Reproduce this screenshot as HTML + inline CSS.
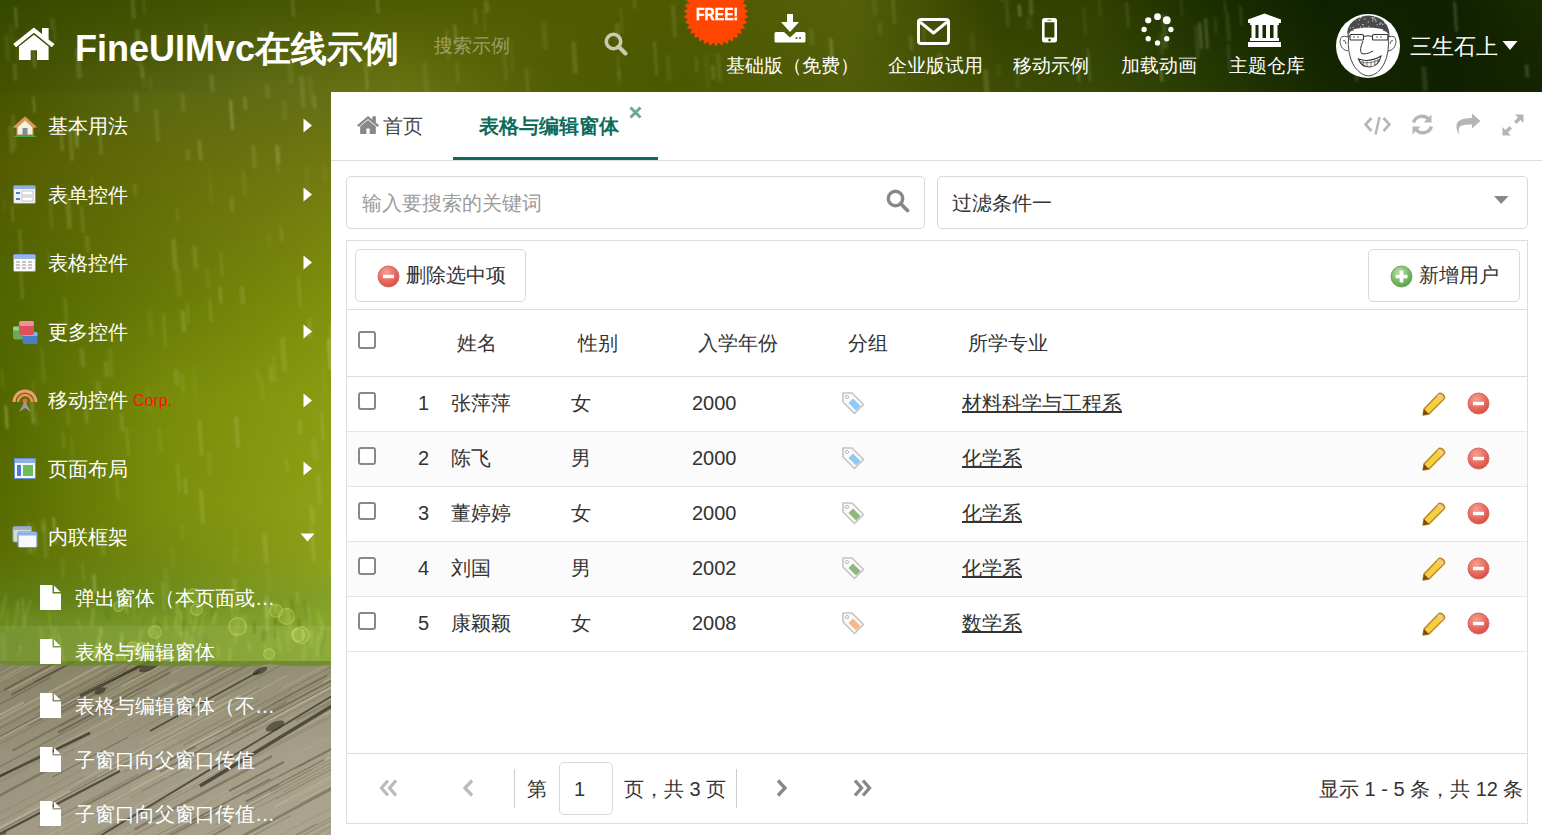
<!DOCTYPE html>
<html><head><meta charset="utf-8">
<style>
*{box-sizing:border-box;margin:0;padding:0}
html,body{width:1542px;height:835px;overflow:hidden}
body{position:relative;font-family:"Liberation Sans",sans-serif;color:#333;
background:#5a6e0c;}
.abs{position:absolute}
.t{position:absolute;white-space:nowrap;line-height:30px;font-size:20px}
#bg{position:absolute;left:0;top:0;width:1542px;height:835px;overflow:hidden}
#main{position:absolute;left:331px;top:92px;width:1211px;height:743px;background:#fff}
.hdtxt{color:#fff;font-size:18.6px}
.side{color:#fff}
.box{position:absolute;border:1px solid #d8d8d8;border-radius:5px;background:#fff}
.ln{position:absolute;background:#e3e3e3;height:1px}
.cb{position:absolute;width:18px;height:18px;border:2px solid #888;border-radius:3px;background:#fff}
.u{text-decoration:underline}
</style></head><body>
<div id="bg">
<div class="abs" style="left:0;top:0px;width:1542px;height:4px;background:linear-gradient(90deg,#364800 0px,#455501 250px,#4d5b00 400px,#505c00 550px,#4e5a00 660px,#546008 850px,#334000 1000px,#323f00 1100px,#1c2e00 1200px,#0e2200 1320px,#102000 1450px,#1a2a00 1542px)"></div><div class="abs" style="left:0;top:4px;width:1542px;height:4px;background:linear-gradient(90deg,#374900 0px,#465602 250px,#4e5c01 400px,#505c00 550px,#4e5a00 660px,#546008 850px,#344100 1000px,#324000 1100px,#1d2f00 1200px,#0f2200 1320px,#102000 1450px,#1a2a00 1542px)"></div><div class="abs" style="left:0;top:8px;width:1542px;height:4px;background:linear-gradient(90deg,#384900 0px,#475703 250px,#4f5d02 400px,#505c00 550px,#4e5a00 660px,#546008 850px,#344100 1000px,#324001 1100px,#1e3000 1200px,#0f2300 1320px,#102000 1450px,#192900 1542px)"></div><div class="abs" style="left:0;top:12px;width:1542px;height:4px;background:linear-gradient(90deg,#384a00 0px,#485804 250px,#515e03 400px,#505c01 550px,#4d5a00 660px,#535f08 850px,#354201 1000px,#334001 1100px,#1e3000 1200px,#0f2300 1320px,#102000 1450px,#192900 1542px)"></div><div class="abs" style="left:0;top:16px;width:1542px;height:4px;background:linear-gradient(90deg,#394a00 0px,#495905 250px,#525f04 400px,#505c01 550px,#4d5a00 660px,#535f08 850px,#354201 1000px,#334101 1100px,#1f3100 1200px,#102300 1320px,#102000 1450px,#192900 1542px)"></div><div class="abs" style="left:0;top:20px;width:1542px;height:4px;background:linear-gradient(90deg,#394a00 0px,#4b5a06 250px,#536004 400px,#505c01 550px,#4d5a00 660px,#535f08 850px,#364301 1000px,#334101 1100px,#1f3100 1200px,#102300 1320px,#102000 1450px,#192900 1542px)"></div><div class="abs" style="left:0;top:24px;width:1542px;height:4px;background:linear-gradient(90deg,#3a4b00 0px,#4c5b07 250px,#546105 400px,#515d01 550px,#4d5900 660px,#535f08 850px,#364301 1000px,#334202 1100px,#203201 1200px,#102400 1320px,#102000 1450px,#192800 1542px)"></div><div class="abs" style="left:0;top:28px;width:1542px;height:4px;background:linear-gradient(90deg,#3b4b00 0px,#4d5c08 250px,#566206 400px,#515d01 550px,#4d5900 660px,#535f08 850px,#374401 1000px,#334202 1100px,#213301 1200px,#112400 1320px,#102000 1450px,#182800 1542px)"></div><div class="abs" style="left:0;top:32px;width:1542px;height:4px;background:linear-gradient(90deg,#3b4c00 0px,#4e5d09 250px,#576407 400px,#515d01 550px,#4d5900 660px,#535f08 850px,#374401 1000px,#334202 1100px,#213301 1200px,#112400 1320px,#102000 1450px,#182800 1542px)"></div><div class="abs" style="left:0;top:36px;width:1542px;height:4px;background:linear-gradient(90deg,#3c4c00 0px,#505e0a 250px,#586507 400px,#515d02 550px,#4c5900 660px,#525e08 850px,#384502 1000px,#344302 1100px,#223401 1200px,#112400 1320px,#102000 1450px,#182800 1542px)"></div><div class="abs" style="left:0;top:40px;width:1542px;height:4px;background:linear-gradient(90deg,#3c4d00 0px,#515f0b 250px,#5a6608 400px,#515d02 550px,#4c5900 660px,#525e08 850px,#384502 1000px,#344303 1100px,#223401 1200px,#122500 1320px,#102000 1450px,#182700 1542px)"></div><div class="abs" style="left:0;top:44px;width:1542px;height:4px;background:linear-gradient(90deg,#3d4d00 0px,#52600c 250px,#5b6709 400px,#515d02 550px,#4c5900 660px,#525e08 850px,#384602 1000px,#344403 1100px,#233501 1200px,#122500 1320px,#102000 1450px,#182700 1542px)"></div><div class="abs" style="left:0;top:48px;width:1542px;height:4px;background:linear-gradient(90deg,#3e4d00 0px,#53610d 250px,#5c680a 400px,#515d02 550px,#4c5900 660px,#525e08 850px,#394702 1000px,#344403 1100px,#243601 1200px,#122500 1320px,#0f2000 1450px,#172700 1542px)"></div><div class="abs" style="left:0;top:52px;width:1542px;height:4px;background:linear-gradient(90deg,#3e4e00 0px,#54620e 250px,#5e690b 400px,#515d02 550px,#4c5900 660px,#525e08 850px,#394702 1000px,#344404 1100px,#243601 1200px,#132600 1320px,#0f2000 1450px,#172600 1542px)"></div><div class="abs" style="left:0;top:56px;width:1542px;height:4px;background:linear-gradient(90deg,#3f4e00 0px,#56630f 250px,#5f6a0b 400px,#515d03 550px,#4b5900 660px,#515d08 850px,#3a4803 1000px,#354504 1100px,#253701 1200px,#132600 1320px,#0f2000 1450px,#172600 1542px)"></div><div class="abs" style="left:0;top:60px;width:1542px;height:4px;background:linear-gradient(90deg,#3f4f00 0px,#576410 250px,#606c0c 400px,#515d03 550px,#4b5900 660px,#515d08 850px,#3a4803 1000px,#354504 1100px,#253701 1200px,#132600 1320px,#0f2000 1450px,#172600 1542px)"></div><div class="abs" style="left:0;top:64px;width:1542px;height:4px;background:linear-gradient(90deg,#404f00 0px,#586511 250px,#626d0d 400px,#515d03 550px,#4b5900 660px,#515d08 850px,#3b4903 1000px,#354504 1100px,#263801 1200px,#142600 1320px,#0f2000 1450px,#162600 1542px)"></div><div class="abs" style="left:0;top:68px;width:1542px;height:4px;background:linear-gradient(90deg,#415000 0px,#596612 250px,#636e0e 400px,#525e03 550px,#4b5800 660px,#515d08 850px,#3b4903 1000px,#354605 1100px,#273902 1200px,#142700 1320px,#0f2000 1450px,#162500 1542px)"></div><div class="abs" style="left:0;top:72px;width:1542px;height:4px;background:linear-gradient(90deg,#415000 0px,#5b6713 250px,#646f0e 400px,#525e03 550px,#4b5800 660px,#515d08 850px,#3c4a03 1000px,#354605 1100px,#273902 1200px,#142700 1320px,#0f2000 1450px,#162500 1542px)"></div><div class="abs" style="left:0;top:76px;width:1542px;height:4px;background:linear-gradient(90deg,#425000 0px,#5c6814 250px,#65700f 400px,#525e03 550px,#4b5800 660px,#515d08 850px,#3c4a03 1000px,#354705 1100px,#283a02 1200px,#152700 1320px,#0f2000 1450px,#162500 1542px)"></div><div class="abs" style="left:0;top:80px;width:1542px;height:4px;background:linear-gradient(90deg,#425100 0px,#5d6915 250px,#677110 400px,#525e04 550px,#4a5800 660px,#505c08 850px,#3d4b04 1000px,#364705 1100px,#283a02 1200px,#152700 1320px,#0f2000 1450px,#162500 1542px)"></div><div class="abs" style="left:0;top:84px;width:1542px;height:4px;background:linear-gradient(90deg,#435100 0px,#5e6a16 250px,#687211 400px,#525e04 550px,#4a5800 660px,#505c08 850px,#3d4b04 1000px,#364706 1100px,#293b02 1200px,#152800 1320px,#0f2000 1450px,#152400 1542px)"></div><div class="abs" style="left:0;top:88px;width:1542px;height:4px;background:linear-gradient(90deg,#445200 0px,#5f6b17 250px,#697312 400px,#525e04 550px,#4a5800 660px,#505c08 850px,#3e4c04 1000px,#364806 1100px,#2a3c02 1200px,#162800 1320px,#0f2000 1450px,#152400 1542px)"></div><div class="abs" style="left:0;top:92px;width:331px;height:4px;background:linear-gradient(90deg,#465400 0px,#5a6810 165px,#646e16 331px)"></div><div class="abs" style="left:0;top:96px;width:331px;height:4px;background:linear-gradient(90deg,#475500 0px,#5b680f 165px,#656f16 331px)"></div><div class="abs" style="left:0;top:100px;width:331px;height:4px;background:linear-gradient(90deg,#485500 0px,#5b690f 165px,#666f15 331px)"></div><div class="abs" style="left:0;top:104px;width:331px;height:4px;background:linear-gradient(90deg,#495600 0px,#5c690f 165px,#667015 331px)"></div><div class="abs" style="left:0;top:108px;width:331px;height:4px;background:linear-gradient(90deg,#495600 0px,#5d690e 165px,#677115 331px)"></div><div class="abs" style="left:0;top:112px;width:331px;height:4px;background:linear-gradient(90deg,#4a5700 0px,#5d690e 165px,#687115 331px)"></div><div class="abs" style="left:0;top:116px;width:331px;height:4px;background:linear-gradient(90deg,#4b5700 0px,#5e6a0e 165px,#697214 331px)"></div><div class="abs" style="left:0;top:120px;width:331px;height:4px;background:linear-gradient(90deg,#4c5800 0px,#5e6a0d 165px,#697214 331px)"></div><div class="abs" style="left:0;top:124px;width:331px;height:4px;background:linear-gradient(90deg,#4c5800 0px,#5f6a0d 165px,#6a7314 331px)"></div><div class="abs" style="left:0;top:128px;width:331px;height:4px;background:linear-gradient(90deg,#4d5800 0px,#606a0d 165px,#6b7414 331px)"></div><div class="abs" style="left:0;top:132px;width:331px;height:4px;background:linear-gradient(90deg,#4e5900 0px,#606a0c 165px,#6b7414 331px)"></div><div class="abs" style="left:0;top:136px;width:331px;height:4px;background:linear-gradient(90deg,#4f5900 0px,#616b0c 165px,#6c7513 331px)"></div><div class="abs" style="left:0;top:140px;width:331px;height:4px;background:linear-gradient(90deg,#505a00 0px,#616b0c 165px,#6d7513 331px)"></div><div class="abs" style="left:0;top:144px;width:331px;height:4px;background:linear-gradient(90deg,#505a00 0px,#626b0b 165px,#6e7613 331px)"></div><div class="abs" style="left:0;top:148px;width:331px;height:4px;background:linear-gradient(90deg,#515b00 0px,#636b0b 165px,#6e7713 331px)"></div><div class="abs" style="left:0;top:152px;width:331px;height:4px;background:linear-gradient(90deg,#525b00 0px,#636c0b 165px,#6f7712 331px)"></div><div class="abs" style="left:0;top:156px;width:331px;height:4px;background:linear-gradient(90deg,#535c00 0px,#646c0a 165px,#707812 331px)"></div><div class="abs" style="left:0;top:160px;width:331px;height:4px;background:linear-gradient(90deg,#535c00 0px,#646c0a 165px,#707812 331px)"></div><div class="abs" style="left:0;top:164px;width:331px;height:4px;background:linear-gradient(90deg,#535c00 0px,#646d0a 165px,#717912 331px)"></div><div class="abs" style="left:0;top:168px;width:331px;height:4px;background:linear-gradient(90deg,#535d00 0px,#646d0a 165px,#717a12 331px)"></div><div class="abs" style="left:0;top:172px;width:331px;height:4px;background:linear-gradient(90deg,#535d00 0px,#646d0a 165px,#727a11 331px)"></div><div class="abs" style="left:0;top:176px;width:331px;height:4px;background:linear-gradient(90deg,#535d00 0px,#656e09 165px,#727b11 331px)"></div><div class="abs" style="left:0;top:180px;width:331px;height:4px;background:linear-gradient(90deg,#535d00 0px,#656e09 165px,#737c11 331px)"></div><div class="abs" style="left:0;top:184px;width:331px;height:4px;background:linear-gradient(90deg,#525d00 0px,#656f09 165px,#737c11 331px)"></div><div class="abs" style="left:0;top:188px;width:331px;height:4px;background:linear-gradient(90deg,#525e00 0px,#656f09 165px,#737d11 331px)"></div><div class="abs" style="left:0;top:192px;width:331px;height:4px;background:linear-gradient(90deg,#525e00 0px,#656f09 165px,#747e11 331px)"></div><div class="abs" style="left:0;top:196px;width:331px;height:4px;background:linear-gradient(90deg,#525e00 0px,#657009 165px,#747f10 331px)"></div><div class="abs" style="left:0;top:200px;width:331px;height:4px;background:linear-gradient(90deg,#525e00 0px,#657009 165px,#757f10 331px)"></div><div class="abs" style="left:0;top:204px;width:331px;height:4px;background:linear-gradient(90deg,#525f00 0px,#657109 165px,#758010 331px)"></div><div class="abs" style="left:0;top:208px;width:331px;height:4px;background:linear-gradient(90deg,#525f00 0px,#657109 165px,#768110 331px)"></div><div class="abs" style="left:0;top:212px;width:331px;height:4px;background:linear-gradient(90deg,#525f00 0px,#667108 165px,#768110 331px)"></div><div class="abs" style="left:0;top:216px;width:331px;height:4px;background:linear-gradient(90deg,#525f00 0px,#667208 165px,#778210 331px)"></div><div class="abs" style="left:0;top:220px;width:331px;height:4px;background:linear-gradient(90deg,#526000 0px,#667208 165px,#77830f 331px)"></div><div class="abs" style="left:0;top:224px;width:331px;height:4px;background:linear-gradient(90deg,#526000 0px,#667308 165px,#78830f 331px)"></div><div class="abs" style="left:0;top:228px;width:331px;height:4px;background:linear-gradient(90deg,#526000 0px,#667308 165px,#78840f 331px)"></div><div class="abs" style="left:0;top:232px;width:331px;height:4px;background:linear-gradient(90deg,#516000 0px,#667308 165px,#78850f 331px)"></div><div class="abs" style="left:0;top:236px;width:331px;height:4px;background:linear-gradient(90deg,#516000 0px,#667408 165px,#79850f 331px)"></div><div class="abs" style="left:0;top:240px;width:331px;height:4px;background:linear-gradient(90deg,#516100 0px,#667408 165px,#79860e 331px)"></div><div class="abs" style="left:0;top:244px;width:331px;height:4px;background:linear-gradient(90deg,#516100 0px,#667508 165px,#7a870e 331px)"></div><div class="abs" style="left:0;top:248px;width:331px;height:4px;background:linear-gradient(90deg,#516100 0px,#677507 165px,#7a870e 331px)"></div><div class="abs" style="left:0;top:252px;width:331px;height:4px;background:linear-gradient(90deg,#516100 0px,#677507 165px,#7b880e 331px)"></div><div class="abs" style="left:0;top:256px;width:331px;height:4px;background:linear-gradient(90deg,#516200 0px,#677607 165px,#7b890e 331px)"></div><div class="abs" style="left:0;top:260px;width:331px;height:4px;background:linear-gradient(90deg,#516200 0px,#677607 165px,#7c890e 331px)"></div><div class="abs" style="left:0;top:264px;width:331px;height:4px;background:linear-gradient(90deg,#516200 0px,#677707 165px,#7c8a0d 331px)"></div><div class="abs" style="left:0;top:268px;width:331px;height:4px;background:linear-gradient(90deg,#516200 0px,#677707 165px,#7d8b0d 331px)"></div><div class="abs" style="left:0;top:272px;width:331px;height:4px;background:linear-gradient(90deg,#516300 0px,#677707 165px,#7d8c0d 331px)"></div><div class="abs" style="left:0;top:276px;width:331px;height:4px;background:linear-gradient(90deg,#506300 0px,#677807 165px,#7d8c0d 331px)"></div><div class="abs" style="left:0;top:280px;width:331px;height:4px;background:linear-gradient(90deg,#506300 0px,#677807 165px,#7e8d0d 331px)"></div><div class="abs" style="left:0;top:284px;width:331px;height:4px;background:linear-gradient(90deg,#506300 0px,#687906 165px,#7e8e0d 331px)"></div><div class="abs" style="left:0;top:288px;width:331px;height:4px;background:linear-gradient(90deg,#506300 0px,#687906 165px,#7f8e0c 331px)"></div><div class="abs" style="left:0;top:292px;width:331px;height:4px;background:linear-gradient(90deg,#506400 0px,#687906 165px,#7f8f0c 331px)"></div><div class="abs" style="left:0;top:296px;width:331px;height:4px;background:linear-gradient(90deg,#506400 0px,#687a06 165px,#80900c 331px)"></div><div class="abs" style="left:0;top:300px;width:331px;height:4px;background:linear-gradient(90deg,#506400 0px,#687a06 165px,#80900c 331px)"></div><div class="abs" style="left:0;top:304px;width:331px;height:4px;background:linear-gradient(90deg,#506400 0px,#697b06 165px,#81910c 331px)"></div><div class="abs" style="left:0;top:308px;width:331px;height:4px;background:linear-gradient(90deg,#506400 0px,#6a7c06 165px,#81910d 331px)"></div><div class="abs" style="left:0;top:312px;width:331px;height:4px;background:linear-gradient(90deg,#506400 0px,#6a7d07 165px,#81920d 331px)"></div><div class="abs" style="left:0;top:316px;width:331px;height:4px;background:linear-gradient(90deg,#506400 0px,#6b7d07 165px,#82920d 331px)"></div><div class="abs" style="left:0;top:320px;width:331px;height:4px;background:linear-gradient(90deg,#506400 0px,#6c7e07 165px,#82930d 331px)"></div><div class="abs" style="left:0;top:324px;width:331px;height:4px;background:linear-gradient(90deg,#516500 0px,#6c7f07 165px,#83930e 331px)"></div><div class="abs" style="left:0;top:328px;width:331px;height:4px;background:linear-gradient(90deg,#516500 0px,#6d7f07 165px,#83940e 331px)"></div><div class="abs" style="left:0;top:332px;width:331px;height:4px;background:linear-gradient(90deg,#516500 0px,#6d8007 165px,#83940e 331px)"></div><div class="abs" style="left:0;top:336px;width:331px;height:4px;background:linear-gradient(90deg,#516500 0px,#6e8108 165px,#84950e 331px)"></div><div class="abs" style="left:0;top:340px;width:331px;height:4px;background:linear-gradient(90deg,#516500 0px,#6f8208 165px,#84950f 331px)"></div><div class="abs" style="left:0;top:344px;width:331px;height:4px;background:linear-gradient(90deg,#516500 0px,#6f8208 165px,#85960f 331px)"></div><div class="abs" style="left:0;top:348px;width:331px;height:4px;background:linear-gradient(90deg,#516500 0px,#708308 165px,#85960f 331px)"></div><div class="abs" style="left:0;top:352px;width:331px;height:4px;background:linear-gradient(90deg,#516500 0px,#718408 165px,#85960f 331px)"></div><div class="abs" style="left:0;top:356px;width:331px;height:4px;background:linear-gradient(90deg,#516500 0px,#718408 165px,#86970f 331px)"></div><div class="abs" style="left:0;top:360px;width:331px;height:4px;background:linear-gradient(90deg,#516500 0px,#728508 165px,#869710 331px)"></div><div class="abs" style="left:0;top:364px;width:331px;height:4px;background:linear-gradient(90deg,#516500 0px,#738609 165px,#879810 331px)"></div><div class="abs" style="left:0;top:368px;width:331px;height:4px;background:linear-gradient(90deg,#516500 0px,#738709 165px,#879810 331px)"></div><div class="abs" style="left:0;top:372px;width:331px;height:4px;background:linear-gradient(90deg,#516500 0px,#748709 165px,#879910 331px)"></div><div class="abs" style="left:0;top:376px;width:331px;height:4px;background:linear-gradient(90deg,#526600 0px,#748809 165px,#889911 331px)"></div><div class="abs" style="left:0;top:380px;width:331px;height:4px;background:linear-gradient(90deg,#526600 0px,#758909 165px,#889a11 331px)"></div><div class="abs" style="left:0;top:384px;width:331px;height:4px;background:linear-gradient(90deg,#526600 0px,#768909 165px,#899a11 331px)"></div><div class="abs" style="left:0;top:388px;width:331px;height:4px;background:linear-gradient(90deg,#526600 0px,#768a0a 165px,#899b11 331px)"></div><div class="abs" style="left:0;top:392px;width:331px;height:4px;background:linear-gradient(90deg,#526600 0px,#778b0a 165px,#899b12 331px)"></div><div class="abs" style="left:0;top:396px;width:331px;height:4px;background:linear-gradient(90deg,#526600 0px,#788c0a 165px,#8a9c12 331px)"></div><div class="abs" style="left:0;top:400px;width:331px;height:4px;background:linear-gradient(90deg,#526600 0px,#788c0a 165px,#8a9c12 331px)"></div><div class="abs" style="left:0;top:404px;width:331px;height:4px;background:linear-gradient(90deg,#526600 0px,#788c0a 165px,#8a9c12 331px)"></div><div class="abs" style="left:0;top:408px;width:331px;height:4px;background:linear-gradient(90deg,#526600 0px,#788c0a 165px,#8b9c13 331px)"></div><div class="abs" style="left:0;top:412px;width:331px;height:4px;background:linear-gradient(90deg,#536700 0px,#788c0a 165px,#8b9d13 331px)"></div><div class="abs" style="left:0;top:416px;width:331px;height:4px;background:linear-gradient(90deg,#536700 0px,#788c0a 165px,#8b9d13 331px)"></div><div class="abs" style="left:0;top:420px;width:331px;height:4px;background:linear-gradient(90deg,#536700 0px,#788c0a 165px,#8b9d13 331px)"></div><div class="abs" style="left:0;top:424px;width:331px;height:4px;background:linear-gradient(90deg,#536700 0px,#788c0a 165px,#8b9d13 331px)"></div><div class="abs" style="left:0;top:428px;width:331px;height:4px;background:linear-gradient(90deg,#536700 0px,#798d0b 165px,#8c9d14 331px)"></div><div class="abs" style="left:0;top:432px;width:331px;height:4px;background:linear-gradient(90deg,#536700 0px,#798d0b 165px,#8c9d14 331px)"></div><div class="abs" style="left:0;top:436px;width:331px;height:4px;background:linear-gradient(90deg,#536700 0px,#798d0b 165px,#8c9d14 331px)"></div><div class="abs" style="left:0;top:440px;width:331px;height:4px;background:linear-gradient(90deg,#546800 0px,#798d0b 165px,#8c9e14 331px)"></div><div class="abs" style="left:0;top:444px;width:331px;height:4px;background:linear-gradient(90deg,#546800 0px,#798d0b 165px,#8d9e15 331px)"></div><div class="abs" style="left:0;top:448px;width:331px;height:4px;background:linear-gradient(90deg,#546800 0px,#798d0b 165px,#8d9e15 331px)"></div><div class="abs" style="left:0;top:452px;width:331px;height:4px;background:linear-gradient(90deg,#546800 0px,#798d0b 165px,#8d9e15 331px)"></div><div class="abs" style="left:0;top:456px;width:331px;height:4px;background:linear-gradient(90deg,#546800 0px,#798d0b 165px,#8d9e15 331px)"></div><div class="abs" style="left:0;top:460px;width:331px;height:4px;background:linear-gradient(90deg,#546800 0px,#798d0b 165px,#8e9e16 331px)"></div><div class="abs" style="left:0;top:464px;width:331px;height:4px;background:linear-gradient(90deg,#556900 0px,#798d0b 165px,#8e9f16 331px)"></div><div class="abs" style="left:0;top:468px;width:331px;height:4px;background:linear-gradient(90deg,#556900 0px,#798d0b 165px,#8e9f16 331px)"></div><div class="abs" style="left:0;top:472px;width:331px;height:4px;background:linear-gradient(90deg,#556900 0px,#798d0b 165px,#8e9f16 331px)"></div><div class="abs" style="left:0;top:476px;width:331px;height:4px;background:linear-gradient(90deg,#556900 0px,#798d0b 165px,#8e9f16 331px)"></div><div class="abs" style="left:0;top:480px;width:331px;height:4px;background:linear-gradient(90deg,#556900 0px,#7a8e0c 165px,#8f9f17 331px)"></div><div class="abs" style="left:0;top:484px;width:331px;height:4px;background:linear-gradient(90deg,#556900 0px,#7a8e0c 165px,#8f9f17 331px)"></div><div class="abs" style="left:0;top:488px;width:331px;height:4px;background:linear-gradient(90deg,#556900 0px,#7a8e0c 165px,#8f9f17 331px)"></div><div class="abs" style="left:0;top:492px;width:331px;height:4px;background:linear-gradient(90deg,#566a00 0px,#7a8e0c 165px,#8fa017 331px)"></div><div class="abs" style="left:0;top:496px;width:331px;height:4px;background:linear-gradient(90deg,#566a00 0px,#7a8e0c 165px,#90a018 331px)"></div><div class="abs" style="left:0;top:500px;width:331px;height:4px;background:linear-gradient(90deg,#566a00 0px,#7a8e0c 165px,#90a018 331px)"></div><div class="abs" style="left:0;top:504px;width:331px;height:4px;background:linear-gradient(90deg,#566a00 0px,#7a8e0c 165px,#90a018 331px)"></div><div class="abs" style="left:0;top:508px;width:331px;height:4px;background:linear-gradient(90deg,#576a00 0px,#798e0c 165px,#90a018 331px)"></div><div class="abs" style="left:0;top:512px;width:331px;height:4px;background:linear-gradient(90deg,#576b01 0px,#798d0d 165px,#90a018 331px)"></div><div class="abs" style="left:0;top:516px;width:331px;height:4px;background:linear-gradient(90deg,#576b01 0px,#798d0d 165px,#90a018 331px)"></div><div class="abs" style="left:0;top:520px;width:331px;height:4px;background:linear-gradient(90deg,#586b01 0px,#788d0d 165px,#8fa019 331px)"></div><div class="abs" style="left:0;top:524px;width:331px;height:4px;background:linear-gradient(90deg,#586c02 0px,#788c0e 165px,#8fa019 331px)"></div><div class="abs" style="left:0;top:528px;width:331px;height:4px;background:linear-gradient(90deg,#596c02 0px,#778c0e 165px,#8fa019 331px)"></div><div class="abs" style="left:0;top:532px;width:331px;height:4px;background:linear-gradient(90deg,#596c02 0px,#778c0e 165px,#8fa019 331px)"></div><div class="abs" style="left:0;top:536px;width:331px;height:4px;background:linear-gradient(90deg,#5a6c02 0px,#768c0e 165px,#8fa019 331px)"></div><div class="abs" style="left:0;top:540px;width:331px;height:4px;background:linear-gradient(90deg,#5a6d03 0px,#768b0f 165px,#8fa019 331px)"></div><div class="abs" style="left:0;top:544px;width:331px;height:4px;background:linear-gradient(90deg,#5a6d03 0px,#768b0f 165px,#8fa019 331px)"></div><div class="abs" style="left:0;top:548px;width:331px;height:4px;background:linear-gradient(90deg,#5b6d03 0px,#758b0f 165px,#8ea01a 331px)"></div><div class="abs" style="left:0;top:552px;width:331px;height:4px;background:linear-gradient(90deg,#5b6e04 0px,#758a10 165px,#8ea01a 331px)"></div><div class="abs" style="left:0;top:556px;width:331px;height:4px;background:linear-gradient(90deg,#5c6e04 0px,#748a10 165px,#8ea01a 331px)"></div><div class="abs" style="left:0;top:560px;width:331px;height:4px;background:linear-gradient(90deg,#5c6f05 0px,#748a11 165px,#8ea01b 331px)"></div><div class="abs" style="left:0;top:564px;width:331px;height:4px;background:linear-gradient(90deg,#5c7006 0px,#738a12 165px,#8ca01c 331px)"></div><div class="abs" style="left:0;top:568px;width:331px;height:4px;background:linear-gradient(90deg,#5c7108 0px,#728a14 165px,#8ca01e 331px)"></div><div class="abs" style="left:0;top:572px;width:331px;height:4px;background:linear-gradient(90deg,#5d720a 0px,#728b15 165px,#8aa01f 331px)"></div><div class="abs" style="left:0;top:576px;width:331px;height:4px;background:linear-gradient(90deg,#5d730b 0px,#718b16 165px,#8aa020 331px)"></div><div class="abs" style="left:0;top:580px;width:331px;height:4px;background:linear-gradient(90deg,#5d750d 0px,#718b18 165px,#88a022 331px)"></div><div class="abs" style="left:0;top:584px;width:331px;height:4px;background:linear-gradient(90deg,#5d760e 0px,#708b19 165px,#88a023 331px)"></div><div class="abs" style="left:0;top:588px;width:331px;height:4px;background:linear-gradient(90deg,#5e7710 0px,#708c1a 165px,#86a024 331px)"></div><div class="abs" style="left:0;top:592px;width:331px;height:4px;background:linear-gradient(90deg,#5e7812 0px,#6f8c1c 165px,#86a026 331px)"></div><div class="abs" style="left:0;top:596px;width:331px;height:4px;background:linear-gradient(90deg,#5e7913 0px,#6e8c1d 165px,#84a027 331px)"></div><div class="abs" style="left:0;top:600px;width:331px;height:4px;background:linear-gradient(90deg,#5f7b15 0px,#6f8d1f 165px,#84a028 331px)"></div><div class="abs" style="left:0;top:604px;width:331px;height:4px;background:linear-gradient(90deg,#617e17 0px,#718f20 165px,#85a129 331px)"></div><div class="abs" style="left:0;top:608px;width:331px;height:4px;background:linear-gradient(90deg,#638019 0px,#739222 165px,#86a22a 331px)"></div><div class="abs" style="left:0;top:612px;width:331px;height:4px;background:linear-gradient(90deg,#65831b 0px,#759424 165px,#86a32a 331px)"></div><div class="abs" style="left:0;top:616px;width:331px;height:4px;background:linear-gradient(90deg,#67861d 0px,#779625 165px,#87a42b 331px)"></div><div class="abs" style="left:0;top:620px;width:331px;height:4px;background:linear-gradient(90deg,#69881f 0px,#799827 165px,#88a52c 331px)"></div><div class="abs" style="left:0;top:624px;width:331px;height:4px;background:linear-gradient(90deg,#6a8a20 0px,#7a9a28 165px,#88a62c 331px)"></div><div class="abs" style="left:0;top:628px;width:331px;height:4px;background:linear-gradient(90deg,#6a8a20 0px,#7a9a28 165px,#88a62c 331px)"></div><div class="abs" style="left:0;top:632px;width:331px;height:4px;background:linear-gradient(90deg,#6a8a20 0px,#7a9a28 165px,#88a62c 331px)"></div><div class="abs" style="left:0;top:636px;width:331px;height:4px;background:linear-gradient(90deg,#6b8a21 0px,#7b9a28 165px,#87a52c 331px)"></div><div class="abs" style="left:0;top:640px;width:331px;height:4px;background:linear-gradient(90deg,#6b8a21 0px,#7b9a28 165px,#87a52c 331px)"></div><div class="abs" style="left:0;top:644px;width:331px;height:4px;background:linear-gradient(90deg,#6b8a21 0px,#7b9a28 165px,#87a52c 331px)"></div><div class="abs" style="left:0;top:648px;width:331px;height:4px;background:linear-gradient(90deg,#6b8a21 0px,#7b9a28 165px,#87a52c 331px)"></div><div class="abs" style="left:0;top:652px;width:331px;height:4px;background:linear-gradient(90deg,#6c8a22 0px,#7c9a28 165px,#86a42c 331px)"></div><div class="abs" style="left:0;top:656px;width:331px;height:4px;background:linear-gradient(90deg,#6c8a22 0px,#7c9a28 165px,#86a42c 331px)"></div><div class="abs" style="left:0;top:660px;width:331px;height:1px;background:linear-gradient(90deg,#6c8a22 0px,#7c9a28 165px,#86a42c 331px)"></div>
<div class="abs" style="left:276px;top:144px;width:3.3px;height:30px;background:rgba(225,235,170,0.09);border-radius:3px;filter:blur(0.8px);transform:rotate(-4deg)"></div><div class="abs" style="left:235px;top:416px;width:3.5px;height:32px;background:rgba(225,235,170,0.15);border-radius:3px;filter:blur(0.8px);transform:rotate(-4deg)"></div><div class="abs" style="left:12px;top:114px;width:4.1px;height:36px;background:rgba(225,235,170,0.10);border-radius:3px;filter:blur(0.8px);transform:rotate(-4deg)"></div><div class="abs" style="left:1018px;top:4px;width:2.6px;height:13px;background:rgba(225,235,170,0.25);border-radius:3px;filter:blur(0.8px);transform:rotate(-4deg)"></div><div class="abs" style="left:133px;top:184px;width:3.5px;height:12px;background:rgba(225,235,170,0.11);border-radius:3px;filter:blur(0.8px);transform:rotate(-4deg)"></div><div class="abs" style="left:1214px;top:17px;width:3.3px;height:17px;background:rgba(225,235,170,0.09);border-radius:3px;filter:blur(0.8px);transform:rotate(-4deg)"></div><div class="abs" style="left:1422px;top:66px;width:4.7px;height:26px;background:rgba(225,235,170,0.12);border-radius:3px;filter:blur(0.8px);transform:rotate(-4deg)"></div><div class="abs" style="left:149px;top:75px;width:3.0px;height:16px;background:rgba(225,235,170,0.07);border-radius:3px;filter:blur(0.8px);transform:rotate(-4deg)"></div><div class="abs" style="left:181px;top:523px;width:2.7px;height:16px;background:rgba(225,235,170,0.08);border-radius:3px;filter:blur(0.8px);transform:rotate(-4deg)"></div><div class="abs" style="left:74px;top:123px;width:5.0px;height:22px;background:rgba(225,235,170,0.09);border-radius:3px;filter:blur(0.8px);transform:rotate(-4deg)"></div><div class="abs" style="left:572px;top:41px;width:5.3px;height:33px;background:rgba(225,235,170,0.13);border-radius:3px;filter:blur(0.8px);transform:rotate(-4deg)"></div><div class="abs" style="left:1159px;top:33px;width:5.4px;height:23px;background:rgba(225,235,170,0.08);border-radius:3px;filter:blur(0.8px);transform:rotate(-4deg)"></div><div class="abs" style="left:298px;top:419px;width:4.4px;height:16px;background:rgba(225,235,170,0.12);border-radius:3px;filter:blur(0.8px);transform:rotate(-4deg)"></div><div class="abs" style="left:617px;top:54px;width:2.5px;height:25px;background:rgba(225,235,170,0.08);border-radius:3px;filter:blur(0.8px);transform:rotate(-4deg)"></div><div class="abs" style="left:317px;top:474px;width:3.9px;height:30px;background:rgba(225,235,170,0.11);border-radius:3px;filter:blur(0.8px);transform:rotate(-4deg)"></div><div class="abs" style="left:32px;top:49px;width:4.2px;height:19px;background:rgba(225,235,170,0.16);border-radius:3px;filter:blur(0.8px);transform:rotate(-4deg)"></div><div class="abs" style="left:711px;top:65px;width:3.8px;height:15px;background:rgba(225,235,170,0.14);border-radius:3px;filter:blur(0.8px);transform:rotate(-4deg)"></div><div class="abs" style="left:276px;top:145px;width:4.2px;height:19px;background:rgba(225,235,170,0.15);border-radius:3px;filter:blur(0.8px);transform:rotate(-4deg)"></div><div class="abs" style="left:261px;top:29px;width:3.9px;height:18px;background:rgba(225,235,170,0.05);border-radius:3px;filter:blur(0.8px);transform:rotate(-4deg)"></div><div class="abs" style="left:256px;top:368px;width:2.6px;height:13px;background:rgba(225,235,170,0.09);border-radius:3px;filter:blur(0.8px);transform:rotate(-4deg)"></div><div class="abs" style="left:181px;top:93px;width:3.6px;height:19px;background:rgba(225,235,170,0.11);border-radius:3px;filter:blur(0.8px);transform:rotate(-4deg)"></div><div class="abs" style="left:126px;top:427px;width:3.1px;height:29px;background:rgba(225,235,170,0.12);border-radius:3px;filter:blur(0.8px);transform:rotate(-4deg)"></div><div class="abs" style="left:81px;top:206px;width:2.7px;height:27px;background:rgba(225,235,170,0.13);border-radius:3px;filter:blur(0.8px);transform:rotate(-4deg)"></div><div class="abs" style="left:19px;top:229px;width:2.8px;height:28px;background:rgba(225,235,170,0.14);border-radius:3px;filter:blur(0.8px);transform:rotate(-4deg)"></div><div class="abs" style="left:1348px;top:33px;width:5.0px;height:33px;background:rgba(225,235,170,0.14);border-radius:3px;filter:blur(0.8px);transform:rotate(-4deg)"></div><div class="abs" style="left:483px;top:10px;width:3.4px;height:22px;background:rgba(225,235,170,0.07);border-radius:3px;filter:blur(0.8px);transform:rotate(-4deg)"></div><div class="abs" style="left:456px;top:62px;width:2.7px;height:22px;background:rgba(225,235,170,0.09);border-radius:3px;filter:blur(0.8px);transform:rotate(-4deg)"></div><div class="abs" style="left:53px;top:517px;width:3.3px;height:27px;background:rgba(225,235,170,0.23);border-radius:3px;filter:blur(0.8px);transform:rotate(-4deg)"></div><div class="abs" style="left:872px;top:-1px;width:5.2px;height:17px;background:rgba(225,235,170,0.07);border-radius:3px;filter:blur(0.8px);transform:rotate(-4deg)"></div><div class="abs" style="left:5px;top:405px;width:2.9px;height:24px;background:rgba(225,235,170,0.28);border-radius:3px;filter:blur(0.8px);transform:rotate(-4deg)"></div><div class="abs" style="left:526px;top:67px;width:2.8px;height:34px;background:rgba(225,235,170,0.11);border-radius:3px;filter:blur(0.8px);transform:rotate(-4deg)"></div><div class="abs" style="left:311px;top:508px;width:4.7px;height:15px;background:rgba(225,235,170,0.08);border-radius:3px;filter:blur(0.8px);transform:rotate(-4deg)"></div><div class="abs" style="left:809px;top:28px;width:4.8px;height:18px;background:rgba(225,235,170,0.09);border-radius:3px;filter:blur(0.8px);transform:rotate(-4deg)"></div><div class="abs" style="left:1224px;top:-0px;width:2.4px;height:13px;background:rgba(225,235,170,0.13);border-radius:3px;filter:blur(0.8px);transform:rotate(-4deg)"></div><div class="abs" style="left:176px;top:207px;width:3.4px;height:15px;background:rgba(225,235,170,0.08);border-radius:3px;filter:blur(0.8px);transform:rotate(-4deg)"></div><div class="abs" style="left:33px;top:96px;width:2.0px;height:17px;background:rgba(225,235,170,0.24);border-radius:3px;filter:blur(0.8px);transform:rotate(-4deg)"></div><div class="abs" style="left:176px;top:268px;width:5.4px;height:29px;background:rgba(225,235,170,0.09);border-radius:3px;filter:blur(0.8px);transform:rotate(-4deg)"></div><div class="abs" style="left:503px;top:48px;width:4.4px;height:33px;background:rgba(225,235,170,0.08);border-radius:3px;filter:blur(0.8px);transform:rotate(-4deg)"></div><div class="abs" style="left:686px;top:-9px;width:2.7px;height:30px;background:rgba(225,235,170,0.09);border-radius:3px;filter:blur(0.8px);transform:rotate(-4deg)"></div><div class="abs" style="left:1195px;top:25px;width:3.9px;height:34px;background:rgba(225,235,170,0.10);border-radius:3px;filter:blur(0.8px);transform:rotate(-4deg)"></div><div class="abs" style="left:131px;top:-7px;width:4.4px;height:26px;background:rgba(225,235,170,0.14);border-radius:3px;filter:blur(0.8px);transform:rotate(-4deg)"></div><div class="abs" style="left:892px;top:-7px;width:3.2px;height:31px;background:rgba(225,235,170,0.12);border-radius:3px;filter:blur(0.8px);transform:rotate(-4deg)"></div><div class="abs" style="left:20px;top:264px;width:3.4px;height:35px;background:rgba(225,235,170,0.14);border-radius:3px;filter:blur(0.8px);transform:rotate(-4deg)"></div><div class="abs" style="left:1088px;top:49px;width:2.4px;height:32px;background:rgba(225,235,170,0.17);border-radius:3px;filter:blur(0.8px);transform:rotate(-4deg)"></div><div class="abs" style="left:423px;top:62px;width:5.0px;height:30px;background:rgba(225,235,170,0.08);border-radius:3px;filter:blur(0.8px);transform:rotate(-4deg)"></div><div class="abs" style="left:230px;top:197px;width:4.0px;height:15px;background:rgba(225,235,170,0.12);border-radius:3px;filter:blur(0.8px);transform:rotate(-4deg)"></div><div class="abs" style="left:109px;top:347px;width:4.2px;height:31px;background:rgba(225,235,170,0.09);border-radius:3px;filter:blur(0.8px);transform:rotate(-4deg)"></div><div class="abs" style="left:16px;top:38px;width:2.8px;height:23px;background:rgba(225,235,170,0.07);border-radius:3px;filter:blur(0.8px);transform:rotate(-4deg)"></div><div class="abs" style="left:177px;top:463px;width:3.0px;height:29px;background:rgba(225,235,170,0.11);border-radius:3px;filter:blur(0.8px);transform:rotate(-4deg)"></div><div class="abs" style="left:137px;top:54px;width:5.0px;height:13px;background:rgba(225,235,170,0.08);border-radius:3px;filter:blur(0.8px);transform:rotate(-4deg)"></div><div class="abs" style="left:66px;top:408px;width:4.1px;height:18px;background:rgba(225,235,170,0.09);border-radius:3px;filter:blur(0.8px);transform:rotate(-4deg)"></div><div class="abs" style="left:66px;top:195px;width:5.3px;height:34px;background:rgba(225,235,170,0.15);border-radius:3px;filter:blur(0.8px);transform:rotate(-4deg)"></div><div class="abs" style="left:32px;top:380px;width:2.9px;height:20px;background:rgba(225,235,170,0.06);border-radius:3px;filter:blur(0.8px);transform:rotate(-4deg)"></div><div class="abs" style="left:243px;top:96px;width:3.7px;height:14px;background:rgba(225,235,170,0.15);border-radius:3px;filter:blur(0.8px);transform:rotate(-4deg)"></div><div class="abs" style="left:542px;top:22px;width:5.3px;height:28px;background:rgba(225,235,170,0.09);border-radius:3px;filter:blur(0.8px);transform:rotate(-4deg)"></div><div class="abs" style="left:365px;top:62px;width:3.4px;height:28px;background:rgba(225,235,170,0.15);border-radius:3px;filter:blur(0.8px);transform:rotate(-4deg)"></div><div class="abs" style="left:199px;top:420px;width:2.9px;height:36px;background:rgba(225,235,170,0.16);border-radius:3px;filter:blur(0.8px);transform:rotate(-4deg)"></div><div class="abs" style="left:220px;top:251px;width:3.3px;height:25px;background:rgba(225,235,170,0.10);border-radius:3px;filter:blur(0.8px);transform:rotate(-4deg)"></div><div class="abs" style="left:1525px;top:64px;width:3.6px;height:14px;background:rgba(225,235,170,0.16);border-radius:3px;filter:blur(0.8px);transform:rotate(-4deg)"></div><div class="abs" style="left:100px;top:527px;width:5.3px;height:29px;background:rgba(225,235,170,0.10);border-radius:3px;filter:blur(0.8px);transform:rotate(-4deg)"></div><div class="abs" style="left:69px;top:125px;width:3.8px;height:36px;background:rgba(225,235,170,0.15);border-radius:3px;filter:blur(0.8px);transform:rotate(-4deg)"></div><div class="abs" style="left:50px;top:17px;width:3.2px;height:13px;background:rgba(225,235,170,0.09);border-radius:3px;filter:blur(0.8px);transform:rotate(-4deg)"></div><div class="abs" style="left:49px;top:198px;width:4.1px;height:32px;background:rgba(225,235,170,0.07);border-radius:3px;filter:blur(0.8px);transform:rotate(-4deg)"></div><div class="abs" style="left:468px;top:-20px;width:5.4px;height:16px;background:rgba(225,235,170,0.13);border-radius:3px;filter:blur(0.8px);transform:rotate(-4deg)"></div><div class="abs" style="left:1098px;top:-8px;width:3.2px;height:25px;background:rgba(225,235,170,0.08);border-radius:3px;filter:blur(0.8px);transform:rotate(-4deg)"></div><div class="abs" style="left:240px;top:286px;width:5.0px;height:19px;background:rgba(225,235,170,0.12);border-radius:3px;filter:blur(0.8px);transform:rotate(-4deg)"></div><div class="abs" style="left:273px;top:354px;width:2.6px;height:29px;background:rgba(225,235,170,0.09);border-radius:3px;filter:blur(0.8px);transform:rotate(-4deg)"></div><div class="abs" style="left:236px;top:612px;width:2.9px;height:17px;background:rgba(225,235,170,0.13);border-radius:3px;filter:blur(0.8px);transform:rotate(-4deg)"></div><div class="abs" style="left:99px;top:128px;width:3.2px;height:27px;background:rgba(225,235,170,0.16);border-radius:3px;filter:blur(0.8px);transform:rotate(-4deg)"></div><div class="abs" style="left:285px;top:458px;width:3.9px;height:14px;background:rgba(225,235,170,0.07);border-radius:3px;filter:blur(0.8px);transform:rotate(-4deg)"></div><div class="abs" style="left:209px;top:299px;width:3.0px;height:23px;background:rgba(225,235,170,0.13);border-radius:3px;filter:blur(0.8px);transform:rotate(-4deg)"></div><div class="abs" style="left:187px;top:303px;width:2.3px;height:21px;background:rgba(225,235,170,0.15);border-radius:3px;filter:blur(0.8px);transform:rotate(-4deg)"></div><div class="abs" style="left:1354px;top:60px;width:4.1px;height:22px;background:rgba(225,235,170,0.13);border-radius:3px;filter:blur(0.8px);transform:rotate(-4deg)"></div><div class="abs" style="left:174px;top:369px;width:5.4px;height:17px;background:rgba(225,235,170,0.13);border-radius:3px;filter:blur(0.8px);transform:rotate(-4deg)"></div><div class="abs" style="left:60px;top:125px;width:2.7px;height:26px;background:rgba(225,235,170,0.19);border-radius:3px;filter:blur(0.8px);transform:rotate(-4deg)"></div><div class="abs" style="left:376px;top:-9px;width:3.0px;height:23px;background:rgba(225,235,170,0.16);border-radius:3px;filter:blur(0.8px);transform:rotate(-4deg)"></div><div class="abs" style="left:1000px;top:-10px;width:3.4px;height:13px;background:rgba(225,235,170,0.11);border-radius:3px;filter:blur(0.8px);transform:rotate(-4deg)"></div><div class="abs" style="left:830px;top:38px;width:2.6px;height:24px;background:rgba(225,235,170,0.22);border-radius:3px;filter:blur(0.8px);transform:rotate(-4deg)"></div><div class="abs" style="left:11px;top:205px;width:3.3px;height:17px;background:rgba(225,235,170,0.13);border-radius:3px;filter:blur(0.8px);transform:rotate(-4deg)"></div><div class="abs" style="left:51px;top:631px;width:2.7px;height:23px;background:rgba(225,235,170,0.08);border-radius:3px;filter:blur(0.8px);transform:rotate(-4deg)"></div><div class="abs" style="left:666px;top:55px;width:4.9px;height:26px;background:rgba(225,235,170,0.07);border-radius:3px;filter:blur(0.8px);transform:rotate(-4deg)"></div><div class="abs" style="left:269px;top:633px;width:2.0px;height:19px;background:rgba(225,235,170,0.09);border-radius:3px;filter:blur(0.8px);transform:rotate(-4deg)"></div><div class="abs" style="left:135px;top:29px;width:4.7px;height:14px;background:rgba(225,235,170,0.15);border-radius:3px;filter:blur(0.8px);transform:rotate(-4deg)"></div><div class="abs" style="left:268px;top:234px;width:3.0px;height:13px;background:rgba(225,235,170,0.07);border-radius:3px;filter:blur(0.8px);transform:rotate(-4deg)"></div><div class="abs" style="left:474px;top:8px;width:3.1px;height:17px;background:rgba(225,235,170,0.11);border-radius:3px;filter:blur(0.8px);transform:rotate(-4deg)"></div><div class="abs" style="left:171px;top:548px;width:3.1px;height:22px;background:rgba(225,235,170,0.05);border-radius:3px;filter:blur(0.8px);transform:rotate(-4deg)"></div><div class="abs" style="left:184px;top:477px;width:3.4px;height:17px;background:rgba(225,235,170,0.17);border-radius:3px;filter:blur(0.8px);transform:rotate(-4deg)"></div><div class="abs" style="left:200px;top:489px;width:4.1px;height:35px;background:rgba(225,235,170,0.15);border-radius:3px;filter:blur(0.8px);transform:rotate(-4deg)"></div><div class="abs" style="left:937px;top:52px;width:5.1px;height:15px;background:rgba(225,235,170,0.12);border-radius:3px;filter:blur(0.8px);transform:rotate(-4deg)"></div><div class="abs" style="left:193px;top:366px;width:3.4px;height:30px;background:rgba(225,235,170,0.05);border-radius:3px;filter:blur(0.8px);transform:rotate(-4deg)"></div><div class="abs" style="left:923px;top:28px;width:2.2px;height:17px;background:rgba(225,235,170,0.14);border-radius:3px;filter:blur(0.8px);transform:rotate(-4deg)"></div><div class="abs" style="left:323px;top:164px;width:4.0px;height:17px;background:rgba(225,235,170,0.06);border-radius:3px;filter:blur(0.8px);transform:rotate(-4deg)"></div><div class="abs" style="left:1077px;top:63px;width:3.3px;height:19px;background:rgba(225,235,170,0.15);border-radius:3px;filter:blur(0.8px);transform:rotate(-4deg)"></div><div class="abs" style="left:22px;top:598px;width:2.6px;height:30px;background:rgba(225,235,170,0.14);border-radius:3px;filter:blur(0.8px);transform:rotate(-4deg)"></div><div class="abs" style="left:280px;top:226px;width:2.6px;height:16px;background:rgba(225,235,170,0.11);border-radius:3px;filter:blur(0.8px);transform:rotate(-4deg)"></div><div class="abs" style="left:5px;top:35px;width:4.3px;height:26px;background:rgba(225,235,170,0.09);border-radius:3px;filter:blur(0.8px);transform:rotate(-4deg)"></div><div class="abs" style="left:159px;top:427px;width:2.9px;height:27px;background:rgba(225,235,170,0.07);border-radius:3px;filter:blur(0.8px);transform:rotate(-4deg)"></div><div class="abs" style="left:909px;top:35px;width:3.8px;height:16px;background:rgba(225,235,170,0.12);border-radius:3px;filter:blur(0.8px);transform:rotate(-4deg)"></div><div class="abs" style="left:164px;top:567px;width:4.9px;height:32px;background:rgba(225,235,170,0.07);border-radius:3px;filter:blur(0.8px);transform:rotate(-4deg)"></div><div class="abs" style="left:219px;top:286px;width:2.8px;height:18px;background:rgba(225,235,170,0.17);border-radius:3px;filter:blur(0.8px);transform:rotate(-4deg)"></div><div class="abs" style="left:330px;top:323px;width:3.8px;height:25px;background:rgba(225,235,170,0.15);border-radius:3px;filter:blur(0.8px);transform:rotate(-4deg)"></div><div class="abs" style="left:633px;top:-8px;width:3.2px;height:17px;background:rgba(225,235,170,0.12);border-radius:3px;filter:blur(0.8px);transform:rotate(-4deg)"></div><div class="abs" style="left:16px;top:188px;width:3.3px;height:20px;background:rgba(225,235,170,0.06);border-radius:3px;filter:blur(0.8px);transform:rotate(-4deg)"></div><div class="abs" style="left:43px;top:524px;width:4.0px;height:35px;background:rgba(225,235,170,0.11);border-radius:3px;filter:blur(0.8px);transform:rotate(-4deg)"></div><div class="abs" style="left:242px;top:170px;width:3.5px;height:27px;background:rgba(225,235,170,0.07);border-radius:3px;filter:blur(0.8px);transform:rotate(-4deg)"></div><div class="abs" style="left:1126px;top:2px;width:2.8px;height:26px;background:rgba(225,235,170,0.11);border-radius:3px;filter:blur(0.8px);transform:rotate(-4deg)"></div><div class="abs" style="left:181px;top:310px;width:4.6px;height:23px;background:rgba(225,235,170,0.15);border-radius:3px;filter:blur(0.8px);transform:rotate(-4deg)"></div><div class="abs" style="left:210px;top:74px;width:3.5px;height:18px;background:rgba(225,235,170,0.14);border-radius:3px;filter:blur(0.8px);transform:rotate(-4deg)"></div><div class="abs" style="left:148px;top:310px;width:4.7px;height:27px;background:rgba(225,235,170,0.06);border-radius:3px;filter:blur(0.8px);transform:rotate(-4deg)"></div><div class="abs" style="left:996px;top:64px;width:4.9px;height:12px;background:rgba(225,235,170,0.06);border-radius:3px;filter:blur(0.8px);transform:rotate(-4deg)"></div><div class="abs" style="left:104px;top:361px;width:5.2px;height:16px;background:rgba(225,235,170,0.13);border-radius:3px;filter:blur(0.8px);transform:rotate(-4deg)"></div><div class="abs" style="left:120px;top:413px;width:4.1px;height:19px;background:rgba(225,235,170,0.12);border-radius:3px;filter:blur(0.8px);transform:rotate(-4deg)"></div><div class="abs" style="left:163px;top:313px;width:3.4px;height:34px;background:rgba(225,235,170,0.12);border-radius:3px;filter:blur(0.8px);transform:rotate(-4deg)"></div><div class="abs" style="left:61px;top:558px;width:3.8px;height:20px;background:rgba(225,235,170,0.07);border-radius:3px;filter:blur(0.8px);transform:rotate(-4deg)"></div><div class="abs" style="left:1px;top:369px;width:3.3px;height:20px;background:rgba(225,235,170,0.08);border-radius:3px;filter:blur(0.8px);transform:rotate(-4deg)"></div><div class="abs" style="left:140px;top:65px;width:3.5px;height:13px;background:rgba(225,235,170,0.15);border-radius:3px;filter:blur(0.8px);transform:rotate(-4deg)"></div><div class="abs" style="left:323px;top:366px;width:2.5px;height:29px;background:rgba(225,235,170,0.05);border-radius:3px;filter:blur(0.8px);transform:rotate(-4deg)"></div><div class="abs" style="left:1371px;top:51px;width:2.7px;height:12px;background:rgba(225,235,170,0.12);border-radius:3px;filter:blur(0.8px);transform:rotate(-4deg)"></div><div class="abs" style="left:281px;top:337px;width:5.0px;height:35px;background:rgba(225,235,170,0.13);border-radius:3px;filter:blur(0.8px);transform:rotate(-4deg)"></div><div class="abs" style="left:193px;top:246px;width:3.6px;height:23px;background:rgba(225,235,170,0.14);border-radius:3px;filter:blur(0.8px);transform:rotate(-4deg)"></div><div class="abs" style="left:313px;top:95px;width:2.7px;height:14px;background:rgba(225,235,170,0.16);border-radius:3px;filter:blur(0.8px);transform:rotate(-4deg)"></div><div class="abs" style="left:298px;top:276px;width:2.7px;height:32px;background:rgba(225,235,170,0.12);border-radius:3px;filter:blur(0.8px);transform:rotate(-4deg)"></div><div class="abs" style="left:710px;top:15px;width:4.3px;height:25px;background:rgba(225,235,170,0.13);border-radius:3px;filter:blur(0.8px);transform:rotate(-4deg)"></div><div class="abs" style="left:53px;top:19px;width:3.2px;height:24px;background:rgba(225,235,170,0.08);border-radius:3px;filter:blur(0.8px);transform:rotate(-4deg)"></div><div class="abs" style="left:266px;top:567px;width:4.5px;height:25px;background:rgba(225,235,170,0.05);border-radius:3px;filter:blur(0.8px);transform:rotate(-4deg)"></div><div class="abs" style="left:1180px;top:-3px;width:2.8px;height:20px;background:rgba(225,235,170,0.07);border-radius:3px;filter:blur(0.8px);transform:rotate(-4deg)"></div><div class="abs" style="left:146px;top:387px;width:4.2px;height:24px;background:rgba(225,235,170,0.06);border-radius:3px;filter:blur(0.8px);transform:rotate(-4deg)"></div><div class="abs" style="left:285px;top:599px;width:2.7px;height:23px;background:rgba(225,235,170,0.07);border-radius:3px;filter:blur(0.8px);transform:rotate(-4deg)"></div><div class="abs" style="left:181px;top:374px;width:2.6px;height:19px;background:rgba(225,235,170,0.10);border-radius:3px;filter:blur(0.8px);transform:rotate(-4deg)"></div><div class="abs" style="left:1015px;top:62px;width:3.8px;height:27px;background:rgba(225,235,170,0.06);border-radius:3px;filter:blur(0.8px);transform:rotate(-4deg)"></div><div class="abs" style="left:1215px;top:-19px;width:5.5px;height:18px;background:rgba(225,235,170,0.06);border-radius:3px;filter:blur(0.8px);transform:rotate(-4deg)"></div><div class="abs" style="left:615px;top:23px;width:5.2px;height:17px;background:rgba(225,235,170,0.12);border-radius:3px;filter:blur(0.8px);transform:rotate(-4deg)"></div><div class="abs" style="left:186px;top:149px;width:3.5px;height:12px;background:rgba(225,235,170,0.12);border-radius:3px;filter:blur(0.8px);transform:rotate(-4deg)"></div><div class="abs" style="left:172px;top:239px;width:4.7px;height:31px;background:rgba(225,235,170,0.15);border-radius:3px;filter:blur(0.8px);transform:rotate(-4deg)"></div><div class="abs" style="left:1205px;top:18px;width:2.8px;height:31px;background:rgba(225,235,170,0.20);border-radius:3px;filter:blur(0.8px);transform:rotate(-4deg)"></div><div class="abs" style="left:15px;top:7px;width:2.2px;height:21px;background:rgba(225,235,170,0.24);border-radius:3px;filter:blur(0.8px);transform:rotate(-4deg)"></div><div class="abs" style="left:305px;top:165px;width:4.0px;height:30px;background:rgba(225,235,170,0.05);border-radius:3px;filter:blur(0.8px);transform:rotate(-4deg)"></div><div class="abs" style="left:41px;top:349px;width:4.1px;height:34px;background:rgba(225,235,170,0.09);border-radius:3px;filter:blur(0.8px);transform:rotate(-4deg)"></div><div class="abs" style="left:206px;top:267px;width:4.2px;height:22px;background:rgba(225,235,170,0.06);border-radius:3px;filter:blur(0.8px);transform:rotate(-4deg)"></div><div class="abs" style="left:1083px;top:7px;width:2.6px;height:28px;background:rgba(225,235,170,0.08);border-radius:3px;filter:blur(0.8px);transform:rotate(-4deg)"></div><div class="abs" style="left:85px;top:408px;width:2.8px;height:16px;background:rgba(225,235,170,0.16);border-radius:3px;filter:blur(0.8px);transform:rotate(-4deg)"></div><div class="abs" style="left:233px;top:578px;width:4.9px;height:33px;background:rgba(225,235,170,0.13);border-radius:3px;filter:blur(0.8px);transform:rotate(-4deg)"></div><div class="abs" style="left:33px;top:522px;width:3.2px;height:33px;background:rgba(225,235,170,0.08);border-radius:3px;filter:blur(0.8px);transform:rotate(-4deg)"></div><div class="abs" style="left:717px;top:53px;width:4.1px;height:29px;background:rgba(225,235,170,0.10);border-radius:3px;filter:blur(0.8px);transform:rotate(-4deg)"></div><div class="abs" style="left:134px;top:93px;width:4.7px;height:20px;background:rgba(225,235,170,0.10);border-radius:3px;filter:blur(0.8px);transform:rotate(-4deg)"></div><div class="abs" style="left:205px;top:23px;width:2.9px;height:28px;background:rgba(225,235,170,0.13);border-radius:3px;filter:blur(0.8px);transform:rotate(-4deg)"></div><div class="abs" style="left:64px;top:297px;width:3.7px;height:33px;background:rgba(225,235,170,0.10);border-radius:3px;filter:blur(0.8px);transform:rotate(-4deg)"></div><div class="abs" style="left:446px;top:29px;width:3.1px;height:31px;background:rgba(225,235,170,0.10);border-radius:3px;filter:blur(0.8px);transform:rotate(-4deg)"></div><div class="abs" style="left:1005px;top:-9px;width:3.7px;height:36px;background:rgba(225,235,170,0.09);border-radius:3px;filter:blur(0.8px);transform:rotate(-4deg)"></div><div class="abs" style="left:65px;top:263px;width:3.8px;height:17px;background:rgba(225,235,170,0.05);border-radius:3px;filter:blur(0.8px);transform:rotate(-4deg)"></div><div class="abs" style="left:617px;top:69px;width:4.4px;height:17px;background:rgba(225,235,170,0.06);border-radius:3px;filter:blur(0.8px);transform:rotate(-4deg)"></div><div class="abs" style="left:369px;top:53px;width:3.6px;height:19px;background:rgba(225,235,170,0.06);border-radius:3px;filter:blur(0.8px);transform:rotate(-4deg)"></div><div class="abs" style="left:328px;top:338px;width:2.5px;height:33px;background:rgba(225,235,170,0.28);border-radius:3px;filter:blur(0.8px);transform:rotate(-4deg)"></div><div class="abs" style="left:252px;top:145px;width:4.1px;height:24px;background:rgba(225,235,170,0.11);border-radius:3px;filter:blur(0.8px);transform:rotate(-4deg)"></div><div class="abs" style="left:81px;top:562px;width:4.2px;height:20px;background:rgba(225,235,170,0.07);border-radius:3px;filter:blur(0.8px);transform:rotate(-4deg)"></div><div class="abs" style="left:1454px;top:1px;width:2.5px;height:31px;background:rgba(225,235,170,0.19);border-radius:3px;filter:blur(0.8px);transform:rotate(-4deg)"></div><div class="abs" style="left:143px;top:-1px;width:2.1px;height:15px;background:rgba(225,235,170,0.10);border-radius:3px;filter:blur(0.8px);transform:rotate(-4deg)"></div><div class="abs" style="left:76px;top:48px;width:5.4px;height:31px;background:rgba(225,235,170,0.14);border-radius:3px;filter:blur(0.8px);transform:rotate(-4deg)"></div><div class="abs" style="left:41px;top:518px;width:5.0px;height:15px;background:rgba(225,235,170,0.11);border-radius:3px;filter:blur(0.8px);transform:rotate(-4deg)"></div><div class="abs" style="left:291px;top:-18px;width:2.8px;height:35px;background:rgba(225,235,170,0.14);border-radius:3px;filter:blur(0.8px);transform:rotate(-4deg)"></div><div class="abs" style="left:9px;top:126px;width:4.3px;height:28px;background:rgba(225,235,170,0.12);border-radius:3px;filter:blur(0.8px);transform:rotate(-4deg)"></div><div class="abs" style="left:155px;top:109px;width:3.9px;height:33px;background:rgba(225,235,170,0.11);border-radius:3px;filter:blur(0.8px);transform:rotate(-4deg)"></div><div class="abs" style="left:329px;top:558px;width:4.3px;height:18px;background:rgba(225,235,170,0.10);border-radius:3px;filter:blur(0.8px);transform:rotate(-4deg)"></div><div class="abs" style="left:13px;top:63px;width:4.2px;height:18px;background:rgba(225,235,170,0.13);border-radius:3px;filter:blur(0.8px);transform:rotate(-4deg)"></div><div class="abs" style="left:300px;top:76px;width:5.3px;height:32px;background:rgba(225,235,170,0.11);border-radius:3px;filter:blur(0.8px);transform:rotate(-4deg)"></div><div class="abs" style="left:695px;top:57px;width:2.9px;height:16px;background:rgba(225,235,170,0.11);border-radius:3px;filter:blur(0.8px);transform:rotate(-4deg)"></div><div class="abs" style="left:35px;top:410px;width:2.9px;height:17px;background:rgba(225,235,170,0.08);border-radius:3px;filter:blur(0.8px);transform:rotate(-4deg)"></div><div class="abs" style="left:288px;top:62px;width:4.9px;height:22px;background:rgba(225,235,170,0.09);border-radius:3px;filter:blur(0.8px);transform:rotate(-4deg)"></div><div class="abs" style="left:3px;top:198px;width:3.4px;height:13px;background:rgba(225,235,170,0.05);border-radius:3px;filter:blur(0.8px);transform:rotate(-4deg)"></div><div class="abs" style="left:282px;top:100px;width:4.9px;height:21px;background:rgba(225,235,170,0.07);border-radius:3px;filter:blur(0.8px);transform:rotate(-4deg)"></div><div class="abs" style="left:309px;top:76px;width:4.2px;height:30px;background:rgba(225,235,170,0.06);border-radius:3px;filter:blur(0.8px);transform:rotate(-4deg)"></div><div class="abs" style="left:162px;top:582px;width:3.0px;height:28px;background:rgba(225,235,170,0.14);border-radius:3px;filter:blur(0.8px);transform:rotate(-4deg)"></div><div class="abs" style="left:142px;top:73px;width:4.3px;height:15px;background:rgba(225,235,170,0.06);border-radius:3px;filter:blur(0.8px);transform:rotate(-4deg)"></div><div class="abs" style="left:80px;top:348px;width:5.4px;height:20px;background:rgba(225,235,170,0.12);border-radius:3px;filter:blur(0.8px);transform:rotate(-4deg)"></div><div class="abs" style="left:230px;top:99px;width:3.0px;height:31px;background:rgba(225,235,170,0.24);border-radius:3px;filter:blur(0.8px);transform:rotate(-4deg)"></div><div class="abs" style="left:71px;top:437px;width:2.6px;height:30px;background:rgba(225,235,170,0.08);border-radius:3px;filter:blur(0.8px);transform:rotate(-4deg)"></div><div class="abs" style="left:93px;top:574px;width:2.7px;height:19px;background:rgba(225,235,170,0.26);border-radius:3px;filter:blur(0.8px);transform:rotate(-4deg)"></div><div class="abs" style="left:207px;top:451px;width:4.6px;height:25px;background:rgba(225,235,170,0.06);border-radius:3px;filter:blur(0.8px);transform:rotate(-4deg)"></div><div class="abs" style="left:1160px;top:70px;width:2.9px;height:12px;background:rgba(225,235,170,0.25);border-radius:3px;filter:blur(0.8px);transform:rotate(-4deg)"></div><div class="abs" style="left:1029px;top:8px;width:3.1px;height:22px;background:rgba(225,235,170,0.06);border-radius:3px;filter:blur(0.8px);transform:rotate(-4deg)"></div><div class="abs" style="left:970px;top:32px;width:4.6px;height:22px;background:rgba(225,235,170,0.06);border-radius:3px;filter:blur(0.8px);transform:rotate(-4deg)"></div><div class="abs" style="left:308px;top:318px;width:3.6px;height:20px;background:rgba(225,235,170,0.13);border-radius:3px;filter:blur(0.8px);transform:rotate(-4deg)"></div><div class="abs" style="left:1240px;top:6px;width:2.2px;height:20px;background:rgba(225,235,170,0.14);border-radius:3px;filter:blur(0.8px);transform:rotate(-4deg)"></div><div class="abs" style="left:672px;top:5px;width:4.2px;height:33px;background:rgba(225,235,170,0.11);border-radius:3px;filter:blur(0.8px);transform:rotate(-4deg)"></div><div class="abs" style="left:9px;top:23px;width:5.3px;height:21px;background:rgba(225,235,170,0.05);border-radius:3px;filter:blur(0.8px);transform:rotate(-4deg)"></div><div class="abs" style="left:62px;top:432px;width:2.5px;height:16px;background:rgba(225,235,170,0.11);border-radius:3px;filter:blur(0.8px);transform:rotate(-4deg)"></div><div class="abs" style="left:984px;top:69px;width:5.2px;height:35px;background:rgba(225,235,170,0.15);border-radius:3px;filter:blur(0.8px);transform:rotate(-4deg)"></div><div class="abs" style="left:310px;top:504px;width:3.0px;height:34px;background:rgba(225,235,170,0.10);border-radius:3px;filter:blur(0.8px);transform:rotate(-4deg)"></div><div class="abs" style="left:1026px;top:17px;width:3.4px;height:13px;background:rgba(225,235,170,0.07);border-radius:3px;filter:blur(0.8px);transform:rotate(-4deg)"></div><div class="abs" style="left:189px;top:635px;width:4.6px;height:18px;background:rgba(225,235,170,0.12);border-radius:3px;filter:blur(0.8px);transform:rotate(-4deg)"></div><div class="abs" style="left:116px;top:473px;width:3.3px;height:27px;background:rgba(225,235,170,0.10);border-radius:3px;filter:blur(0.8px);transform:rotate(-4deg)"></div><div class="abs" style="left:31px;top:399px;width:2.7px;height:25px;background:rgba(225,235,170,0.24);border-radius:3px;filter:blur(0.8px);transform:rotate(-4deg)"></div><div class="abs" style="left:1162px;top:14px;width:4.5px;height:35px;background:rgba(225,235,170,0.13);border-radius:3px;filter:blur(0.8px);transform:rotate(-4deg)"></div><div class="abs" style="left:198px;top:140px;width:4.3px;height:21px;background:rgba(225,235,170,0.16);border-radius:3px;filter:blur(0.8px);transform:rotate(-4deg)"></div><div class="abs" style="left:830px;top:-19px;width:5.4px;height:13px;background:rgba(225,235,170,0.08);border-radius:3px;filter:blur(0.8px);transform:rotate(-4deg)"></div><div class="abs" style="left:265px;top:595px;width:5.2px;height:24px;background:rgba(225,235,170,0.15);border-radius:3px;filter:blur(0.8px);transform:rotate(-4deg)"></div><div class="abs" style="left:154px;top:35px;width:5.0px;height:19px;background:rgba(225,235,170,0.06);border-radius:3px;filter:blur(0.8px);transform:rotate(-4deg)"></div><div class="abs" style="left:454px;top:24px;width:3.3px;height:22px;background:rgba(225,235,170,0.19);border-radius:3px;filter:blur(0.8px);transform:rotate(-4deg)"></div><div class="abs" style="left:878px;top:22px;width:4.1px;height:13px;background:rgba(225,235,170,0.09);border-radius:3px;filter:blur(0.8px);transform:rotate(-4deg)"></div><div class="abs" style="left:96px;top:381px;width:5.3px;height:22px;background:rgba(225,235,170,0.12);border-radius:3px;filter:blur(0.8px);transform:rotate(-4deg)"></div><div class="abs" style="left:123px;top:576px;width:3.0px;height:36px;background:rgba(225,235,170,0.05);border-radius:3px;filter:blur(0.8px);transform:rotate(-4deg)"></div><div class="abs" style="left:263px;top:533px;width:5.4px;height:31px;background:rgba(225,235,170,0.13);border-radius:3px;filter:blur(0.8px);transform:rotate(-4deg)"></div><div class="abs" style="left:705px;top:54px;width:4.1px;height:36px;background:rgba(225,235,170,0.05);border-radius:3px;filter:blur(0.8px);transform:rotate(-4deg)"></div><div class="abs" style="left:620px;top:7px;width:2.9px;height:26px;background:rgba(225,235,170,0.08);border-radius:3px;filter:blur(0.8px);transform:rotate(-4deg)"></div><div class="abs" style="left:265px;top:600px;width:2.6px;height:31px;background:rgba(225,235,170,0.21);border-radius:3px;filter:blur(0.8px);transform:rotate(-4deg)"></div><div class="abs" style="left:1019px;top:60px;width:3.2px;height:15px;background:rgba(225,235,170,0.14);border-radius:3px;filter:blur(0.8px);transform:rotate(-4deg)"></div><div class="abs" style="left:1px;top:633px;width:5.4px;height:32px;background:rgba(225,235,170,0.09);border-radius:3px;filter:blur(0.8px);transform:rotate(-4deg)"></div><div class="abs" style="left:311px;top:532px;width:4.2px;height:30px;background:rgba(225,235,170,0.12);border-radius:3px;filter:blur(0.8px);transform:rotate(-4deg)"></div><div class="abs" style="left:312px;top:437px;width:4.8px;height:23px;background:rgba(225,235,170,0.07);border-radius:3px;filter:blur(0.8px);transform:rotate(-4deg)"></div><div class="abs" style="left:654px;top:41px;width:2.7px;height:35px;background:rgba(225,235,170,0.13);border-radius:3px;filter:blur(0.8px);transform:rotate(-4deg)"></div><div class="abs" style="left:307px;top:605px;width:4.1px;height:26px;background:rgba(225,235,170,0.08);border-radius:3px;filter:blur(0.8px);transform:rotate(-4deg)"></div><div class="abs" style="left:1029px;top:-8px;width:3.8px;height:23px;background:rgba(225,235,170,0.16);border-radius:3px;filter:blur(0.8px);transform:rotate(-4deg)"></div><div class="abs" style="left:269px;top:365px;width:3.5px;height:18px;background:rgba(225,235,170,0.12);border-radius:3px;filter:blur(0.8px);transform:rotate(-4deg)"></div><div class="abs" style="left:265px;top:84px;width:5.4px;height:15px;background:rgba(225,235,170,0.09);border-radius:3px;filter:blur(0.8px);transform:rotate(-4deg)"></div><div class="abs" style="left:233px;top:547px;width:4.3px;height:15px;background:rgba(225,235,170,0.06);border-radius:3px;filter:blur(0.8px);transform:rotate(-4deg)"></div><div class="abs" style="left:209px;top:169px;width:3.3px;height:35px;background:rgba(225,235,170,0.06);border-radius:3px;filter:blur(0.8px);transform:rotate(-4deg)"></div><div class="abs" style="left:27px;top:523px;width:4.8px;height:31px;background:rgba(225,235,170,0.14);border-radius:3px;filter:blur(0.8px);transform:rotate(-4deg)"></div><div class="abs" style="left:510px;top:37px;width:2.9px;height:33px;background:rgba(225,235,170,0.06);border-radius:3px;filter:blur(0.8px);transform:rotate(-4deg)"></div><div class="abs" style="left:260px;top:376px;width:3.8px;height:26px;background:rgba(225,235,170,0.06);border-radius:3px;filter:blur(0.8px);transform:rotate(-4deg)"></div><div class="abs" style="left:1199px;top:22px;width:2.6px;height:27px;background:rgba(225,235,170,0.21);border-radius:3px;filter:blur(0.8px);transform:rotate(-4deg)"></div><div class="abs" style="left:484px;top:0px;width:4.7px;height:13px;background:rgba(225,235,170,0.14);border-radius:3px;filter:blur(0.8px);transform:rotate(-4deg)"></div><div class="abs" style="left:234px;top:529px;width:4.3px;height:15px;background:rgba(225,235,170,0.05);border-radius:3px;filter:blur(0.8px);transform:rotate(-4deg)"></div><div class="abs" style="left:75px;top:131px;width:2.6px;height:18px;background:rgba(225,235,170,0.16);border-radius:3px;filter:blur(0.8px);transform:rotate(-4deg)"></div><div class="abs" style="left:331px;top:528px;width:3.3px;height:22px;background:rgba(225,235,170,0.10);border-radius:3px;filter:blur(0.8px);transform:rotate(-4deg)"></div><div class="abs" style="left:1227px;top:44px;width:3.8px;height:28px;background:rgba(225,235,170,0.09);border-radius:3px;filter:blur(0.8px);transform:rotate(-4deg)"></div><div class="abs" style="left:321px;top:412px;width:3.2px;height:29px;background:rgba(225,235,170,0.13);border-radius:3px;filter:blur(0.8px);transform:rotate(-4deg)"></div><div class="abs" style="left:47px;top:251px;width:3.1px;height:13px;background:rgba(225,235,170,0.07);border-radius:3px;filter:blur(0.8px);transform:rotate(-4deg)"></div><div class="abs" style="left:1226px;top:12px;width:3.5px;height:30px;background:rgba(225,235,170,0.10);border-radius:3px;filter:blur(0.8px);transform:rotate(-4deg)"></div><div class="abs" style="left:85px;top:235px;width:5.3px;height:17px;background:rgba(225,235,170,0.11);border-radius:3px;filter:blur(0.8px);transform:rotate(-4deg)"></div><div class="abs" style="left:91px;top:177px;width:2.8px;height:18px;background:rgba(225,235,170,0.07);border-radius:3px;filter:blur(0.8px);transform:rotate(-4deg)"></div><div class="abs" style="left:206px;top:635px;width:1.5px;height:26px;background:rgba(40,70,0,0.22);border-radius:2px;filter:blur(1px);transform:rotate(-8deg)"></div><div class="abs" style="left:17px;top:599px;width:2.0px;height:17px;background:rgba(180,210,80,0.17);border-radius:2px;filter:blur(1px);transform:rotate(-8deg)"></div><div class="abs" style="left:242px;top:614px;width:3.0px;height:14px;background:rgba(180,210,80,0.31);border-radius:2px;filter:blur(1px);transform:rotate(-11deg)"></div><div class="abs" style="left:204px;top:598px;width:1.5px;height:10px;background:rgba(180,210,80,0.19);border-radius:2px;filter:blur(1px);transform:rotate(14deg)"></div><div class="abs" style="left:289px;top:607px;width:2.0px;height:29px;background:rgba(180,210,80,0.34);border-radius:2px;filter:blur(1px);transform:rotate(-9deg)"></div><div class="abs" style="left:319px;top:613px;width:3.0px;height:10px;background:rgba(180,210,80,0.18);border-radius:2px;filter:blur(1px);transform:rotate(-13deg)"></div><div class="abs" style="left:100px;top:626px;width:2.5px;height:10px;background:rgba(180,210,80,0.22);border-radius:2px;filter:blur(1px);transform:rotate(-6deg)"></div><div class="abs" style="left:231px;top:601px;width:2.0px;height:19px;background:rgba(180,210,80,0.35);border-radius:2px;filter:blur(1px);transform:rotate(-14deg)"></div><div class="abs" style="left:248px;top:641px;width:3.0px;height:10px;background:rgba(180,210,80,0.27);border-radius:2px;filter:blur(1px);transform:rotate(-15deg)"></div><div class="abs" style="left:15px;top:601px;width:2.0px;height:29px;background:rgba(180,210,80,0.20);border-radius:2px;filter:blur(1px);transform:rotate(10deg)"></div><div class="abs" style="left:153px;top:621px;width:2.5px;height:28px;background:rgba(40,70,0,0.12);border-radius:2px;filter:blur(1px);transform:rotate(7deg)"></div><div class="abs" style="left:264px;top:642px;width:1.5px;height:11px;background:rgba(180,210,80,0.25);border-radius:2px;filter:blur(1px);transform:rotate(-4deg)"></div><div class="abs" style="left:49px;top:607px;width:1.5px;height:24px;background:rgba(180,210,80,0.21);border-radius:2px;filter:blur(1px);transform:rotate(-10deg)"></div><div class="abs" style="left:26px;top:599px;width:3.0px;height:24px;background:rgba(180,210,80,0.16);border-radius:2px;filter:blur(1px);transform:rotate(15deg)"></div><div class="abs" style="left:177px;top:614px;width:2.5px;height:15px;background:rgba(40,70,0,0.17);border-radius:2px;filter:blur(1px);transform:rotate(-2deg)"></div><div class="abs" style="left:18px;top:645px;width:3.0px;height:11px;background:rgba(180,210,80,0.19);border-radius:2px;filter:blur(1px);transform:rotate(14deg)"></div><div class="abs" style="left:187px;top:598px;width:3.0px;height:28px;background:rgba(180,210,80,0.24);border-radius:2px;filter:blur(1px);transform:rotate(-11deg)"></div><div class="abs" style="left:280px;top:608px;width:2.0px;height:19px;background:rgba(40,70,0,0.17);border-radius:2px;filter:blur(1px);transform:rotate(-0deg)"></div><div class="abs" style="left:241px;top:619px;width:3.0px;height:16px;background:rgba(40,70,0,0.12);border-radius:2px;filter:blur(1px);transform:rotate(10deg)"></div><div class="abs" style="left:176px;top:601px;width:2.5px;height:29px;background:rgba(180,210,80,0.25);border-radius:2px;filter:blur(1px);transform:rotate(0deg)"></div><div class="abs" style="left:181px;top:620px;width:2.5px;height:11px;background:rgba(40,70,0,0.20);border-radius:2px;filter:blur(1px);transform:rotate(8deg)"></div><div class="abs" style="left:120px;top:632px;width:3.0px;height:16px;background:rgba(180,210,80,0.35);border-radius:2px;filter:blur(1px);transform:rotate(6deg)"></div><div class="abs" style="left:317px;top:610px;width:1.5px;height:14px;background:rgba(180,210,80,0.30);border-radius:2px;filter:blur(1px);transform:rotate(-5deg)"></div><div class="abs" style="left:91px;top:607px;width:2.5px;height:20px;background:rgba(180,210,80,0.28);border-radius:2px;filter:blur(1px);transform:rotate(7deg)"></div><div class="abs" style="left:274px;top:611px;width:3.0px;height:27px;background:rgba(40,70,0,0.24);border-radius:2px;filter:blur(1px);transform:rotate(1deg)"></div><div class="abs" style="left:175px;top:600px;width:3.0px;height:27px;background:rgba(180,210,80,0.17);border-radius:2px;filter:blur(1px);transform:rotate(5deg)"></div><div class="abs" style="left:138px;top:627px;width:3.0px;height:29px;background:rgba(180,210,80,0.26);border-radius:2px;filter:blur(1px);transform:rotate(11deg)"></div><div class="abs" style="left:90px;top:650px;width:3.0px;height:14px;background:rgba(40,70,0,0.13);border-radius:2px;filter:blur(1px);transform:rotate(8deg)"></div><div class="abs" style="left:60px;top:633px;width:2.0px;height:30px;background:rgba(180,210,80,0.33);border-radius:2px;filter:blur(1px);transform:rotate(-12deg)"></div><div class="abs" style="left:320px;top:619px;width:3.0px;height:21px;background:rgba(180,210,80,0.23);border-radius:2px;filter:blur(1px);transform:rotate(3deg)"></div><div class="abs" style="left:195px;top:604px;width:1.5px;height:28px;background:rgba(180,210,80,0.34);border-radius:2px;filter:blur(1px);transform:rotate(11deg)"></div><div class="abs" style="left:287px;top:631px;width:1.5px;height:21px;background:rgba(180,210,80,0.21);border-radius:2px;filter:blur(1px);transform:rotate(-6deg)"></div><div class="abs" style="left:170px;top:647px;width:2.5px;height:16px;background:rgba(40,70,0,0.16);border-radius:2px;filter:blur(1px);transform:rotate(9deg)"></div><div class="abs" style="left:213px;top:612px;width:3.0px;height:13px;background:rgba(180,210,80,0.34);border-radius:2px;filter:blur(1px);transform:rotate(14deg)"></div><div class="abs" style="left:201px;top:611px;width:1.5px;height:28px;background:rgba(180,210,80,0.22);border-radius:2px;filter:blur(1px);transform:rotate(12deg)"></div><div class="abs" style="left:179px;top:610px;width:3.0px;height:28px;background:rgba(180,210,80,0.35);border-radius:2px;filter:blur(1px);transform:rotate(-0deg)"></div><div class="abs" style="left:159px;top:632px;width:2.0px;height:18px;background:rgba(180,210,80,0.20);border-radius:2px;filter:blur(1px);transform:rotate(14deg)"></div><div class="abs" style="left:164px;top:615px;width:2.5px;height:16px;background:rgba(180,210,80,0.21);border-radius:2px;filter:blur(1px);transform:rotate(-1deg)"></div><div class="abs" style="left:40px;top:627px;width:2.5px;height:19px;background:rgba(180,210,80,0.18);border-radius:2px;filter:blur(1px);transform:rotate(-3deg)"></div><div class="abs" style="left:159px;top:624px;width:3.0px;height:15px;background:rgba(40,70,0,0.14);border-radius:2px;filter:blur(1px);transform:rotate(-7deg)"></div><div class="abs" style="left:51px;top:649px;width:3.0px;height:16px;background:rgba(180,210,80,0.32);border-radius:2px;filter:blur(1px);transform:rotate(11deg)"></div><div class="abs" style="left:296px;top:591px;width:2.5px;height:13px;background:rgba(180,210,80,0.22);border-radius:2px;filter:blur(1px);transform:rotate(-6deg)"></div><div class="abs" style="left:175px;top:618px;width:2.0px;height:17px;background:rgba(180,210,80,0.20);border-radius:2px;filter:blur(1px);transform:rotate(-1deg)"></div><div class="abs" style="left:303px;top:643px;width:1.5px;height:21px;background:rgba(180,210,80,0.31);border-radius:2px;filter:blur(1px);transform:rotate(3deg)"></div><div class="abs" style="left:228px;top:647px;width:3.0px;height:23px;background:rgba(180,210,80,0.29);border-radius:2px;filter:blur(1px);transform:rotate(7deg)"></div><div class="abs" style="left:298px;top:618px;width:2.5px;height:25px;background:rgba(40,70,0,0.20);border-radius:2px;filter:blur(1px);transform:rotate(-2deg)"></div><div class="abs" style="left:95px;top:637px;width:2.0px;height:28px;background:rgba(180,210,80,0.29);border-radius:2px;filter:blur(1px);transform:rotate(12deg)"></div><div class="abs" style="left:322px;top:622px;width:1.5px;height:19px;background:rgba(180,210,80,0.20);border-radius:2px;filter:blur(1px);transform:rotate(10deg)"></div><div class="abs" style="left:262px;top:630px;width:3.0px;height:11px;background:rgba(40,70,0,0.25);border-radius:2px;filter:blur(1px);transform:rotate(6deg)"></div><div class="abs" style="left:16px;top:641px;width:1.5px;height:14px;background:rgba(40,70,0,0.12);border-radius:2px;filter:blur(1px);transform:rotate(-6deg)"></div><div class="abs" style="left:304px;top:599px;width:3.0px;height:22px;background:rgba(40,70,0,0.11);border-radius:2px;filter:blur(1px);transform:rotate(-9deg)"></div><div class="abs" style="left:184px;top:630px;width:2.5px;height:25px;background:rgba(180,210,80,0.27);border-radius:2px;filter:blur(1px);transform:rotate(7deg)"></div><div class="abs" style="left:291px;top:598px;width:2.5px;height:19px;background:rgba(40,70,0,0.17);border-radius:2px;filter:blur(1px);transform:rotate(-4deg)"></div><div class="abs" style="left:217px;top:645px;width:2.5px;height:13px;background:rgba(180,210,80,0.28);border-radius:2px;filter:blur(1px);transform:rotate(0deg)"></div><div class="abs" style="left:301px;top:623px;width:2.5px;height:22px;background:rgba(180,210,80,0.20);border-radius:2px;filter:blur(1px);transform:rotate(10deg)"></div><div class="abs" style="left:94px;top:649px;width:2.5px;height:26px;background:rgba(180,210,80,0.23);border-radius:2px;filter:blur(1px);transform:rotate(-11deg)"></div><div class="abs" style="left:6px;top:610px;width:1.5px;height:21px;background:rgba(180,210,80,0.17);border-radius:2px;filter:blur(1px);transform:rotate(3deg)"></div><div class="abs" style="left:79px;top:643px;width:2.5px;height:20px;background:rgba(180,210,80,0.26);border-radius:2px;filter:blur(1px);transform:rotate(1deg)"></div><div class="abs" style="left:127px;top:641px;width:3.0px;height:29px;background:rgba(40,70,0,0.13);border-radius:2px;filter:blur(1px);transform:rotate(-12deg)"></div><div class="abs" style="left:322px;top:630px;width:2.0px;height:26px;background:rgba(40,70,0,0.16);border-radius:2px;filter:blur(1px);transform:rotate(10deg)"></div><div class="abs" style="left:96px;top:646px;width:3.0px;height:24px;background:rgba(180,210,80,0.29);border-radius:2px;filter:blur(1px);transform:rotate(-4deg)"></div><div class="abs" style="left:98px;top:628px;width:2.5px;height:29px;background:rgba(180,210,80,0.27);border-radius:2px;filter:blur(1px);transform:rotate(2deg)"></div><div class="abs" style="left:245px;top:614px;width:1.5px;height:12px;background:rgba(180,210,80,0.19);border-radius:2px;filter:blur(1px);transform:rotate(-0deg)"></div><div class="abs" style="left:310px;top:630px;width:3.0px;height:17px;background:rgba(180,210,80,0.33);border-radius:2px;filter:blur(1px);transform:rotate(4deg)"></div><div class="abs" style="left:142px;top:618px;width:2.0px;height:12px;background:rgba(40,70,0,0.11);border-radius:2px;filter:blur(1px);transform:rotate(11deg)"></div><div class="abs" style="left:288px;top:618px;width:1.5px;height:21px;background:rgba(180,210,80,0.18);border-radius:2px;filter:blur(1px);transform:rotate(-6deg)"></div><div class="abs" style="left:78px;top:619px;width:2.5px;height:11px;background:rgba(180,210,80,0.16);border-radius:2px;filter:blur(1px);transform:rotate(-14deg)"></div><div class="abs" style="left:151px;top:641px;width:2.5px;height:13px;background:rgba(180,210,80,0.28);border-radius:2px;filter:blur(1px);transform:rotate(7deg)"></div><div class="abs" style="left:54px;top:602px;width:2.0px;height:10px;background:rgba(40,70,0,0.19);border-radius:2px;filter:blur(1px);transform:rotate(12deg)"></div><div class="abs" style="left:234px;top:631px;width:2.5px;height:14px;background:rgba(180,210,80,0.30);border-radius:2px;filter:blur(1px);transform:rotate(7deg)"></div><div class="abs" style="left:54px;top:604px;width:1.5px;height:23px;background:rgba(40,70,0,0.16);border-radius:2px;filter:blur(1px);transform:rotate(14deg)"></div><div class="abs" style="left:2px;top:594px;width:3.0px;height:26px;background:rgba(180,210,80,0.16);border-radius:2px;filter:blur(1px);transform:rotate(10deg)"></div><div class="abs" style="left:277px;top:624px;width:1.5px;height:29px;background:rgba(180,210,80,0.31);border-radius:2px;filter:blur(1px);transform:rotate(-12deg)"></div><div class="abs" style="left:156px;top:631px;width:3.0px;height:23px;background:rgba(180,210,80,0.16);border-radius:2px;filter:blur(1px);transform:rotate(-7deg)"></div><div class="abs" style="left:135px;top:608px;width:1.5px;height:11px;background:rgba(40,70,0,0.13);border-radius:2px;filter:blur(1px);transform:rotate(6deg)"></div><div class="abs" style="left:212px;top:601px;width:2.5px;height:15px;background:rgba(40,70,0,0.11);border-radius:2px;filter:blur(1px);transform:rotate(15deg)"></div><div class="abs" style="left:54px;top:595px;width:1.5px;height:25px;background:rgba(180,210,80,0.22);border-radius:2px;filter:blur(1px);transform:rotate(-2deg)"></div><div class="abs" style="left:254px;top:621px;width:1.5px;height:13px;background:rgba(40,70,0,0.15);border-radius:2px;filter:blur(1px);transform:rotate(-2deg)"></div><div class="abs" style="left:274px;top:603px;width:2.5px;height:12px;background:rgba(180,210,80,0.31);border-radius:2px;filter:blur(1px);transform:rotate(-7deg)"></div><div class="abs" style="left:133px;top:598px;width:3.0px;height:21px;background:rgba(180,210,80,0.17);border-radius:2px;filter:blur(1px);transform:rotate(-2deg)"></div><div class="abs" style="left:191px;top:605px;width:2.0px;height:11px;background:rgba(180,210,80,0.19);border-radius:2px;filter:blur(1px);transform:rotate(-6deg)"></div><div class="abs" style="left:124px;top:596px;width:2.5px;height:18px;background:rgba(180,210,80,0.30);border-radius:2px;filter:blur(1px);transform:rotate(-15deg)"></div><div class="abs" style="left:95px;top:646px;width:1.5px;height:13px;background:rgba(180,210,80,0.31);border-radius:2px;filter:blur(1px);transform:rotate(5deg)"></div><div class="abs" style="left:316px;top:634px;width:2.5px;height:24px;background:rgba(180,210,80,0.31);border-radius:2px;filter:blur(1px);transform:rotate(2deg)"></div><div class="abs" style="left:106px;top:608px;width:3.0px;height:13px;background:rgba(40,70,0,0.14);border-radius:2px;filter:blur(1px);transform:rotate(-13deg)"></div><div class="abs" style="left:253px;top:623px;width:1.5px;height:11px;background:rgba(40,70,0,0.22);border-radius:2px;filter:blur(1px);transform:rotate(-2deg)"></div><div class="abs" style="left:85px;top:647px;width:3.0px;height:10px;background:rgba(180,210,80,0.19);border-radius:2px;filter:blur(1px);transform:rotate(-4deg)"></div><div class="abs" style="left:54px;top:627px;width:1.5px;height:13px;background:rgba(180,210,80,0.27);border-radius:2px;filter:blur(1px);transform:rotate(4deg)"></div><div class="abs" style="left:48px;top:636px;width:3.0px;height:19px;background:rgba(180,210,80,0.21);border-radius:2px;filter:blur(1px);transform:rotate(12deg)"></div><div class="abs" style="left:153px;top:616px;width:2.0px;height:19px;background:rgba(180,210,80,0.34);border-radius:2px;filter:blur(1px);transform:rotate(3deg)"></div><div class="abs" style="left:126px;top:641px;width:14px;height:14px;border-radius:50%;background:rgba(210,230,100,0.18);box-shadow:inset 0 0 0 1.5px rgba(220,240,120,0.25);filter:blur(0.6px)"></div><div class="abs" style="left:116px;top:653px;width:10px;height:10px;border-radius:50%;background:rgba(210,230,100,0.18);box-shadow:inset 0 0 0 1.5px rgba(220,240,120,0.25);filter:blur(0.6px)"></div><div class="abs" style="left:228px;top:617px;width:19px;height:19px;border-radius:50%;background:rgba(210,230,100,0.18);box-shadow:inset 0 0 0 1.5px rgba(220,240,120,0.25);filter:blur(0.6px)"></div><div class="abs" style="left:190px;top:603px;width:13px;height:13px;border-radius:50%;background:rgba(210,230,100,0.18);box-shadow:inset 0 0 0 1.5px rgba(220,240,120,0.25);filter:blur(0.6px)"></div><div class="abs" style="left:148px;top:625px;width:14px;height:14px;border-radius:50%;background:rgba(210,230,100,0.18);box-shadow:inset 0 0 0 1.5px rgba(220,240,120,0.25);filter:blur(0.6px)"></div><div class="abs" style="left:269px;top:604px;width:14px;height:14px;border-radius:50%;background:rgba(210,230,100,0.18);box-shadow:inset 0 0 0 1.5px rgba(220,240,120,0.25);filter:blur(0.6px)"></div><div class="abs" style="left:156px;top:650px;width:18px;height:18px;border-radius:50%;background:rgba(210,230,100,0.18);box-shadow:inset 0 0 0 1.5px rgba(220,240,120,0.25);filter:blur(0.6px)"></div><div class="abs" style="left:291px;top:628px;width:14px;height:14px;border-radius:50%;background:rgba(210,230,100,0.18);box-shadow:inset 0 0 0 1.5px rgba(220,240,120,0.25);filter:blur(0.6px)"></div><div class="abs" style="left:134px;top:642px;width:15px;height:15px;border-radius:50%;background:rgba(210,230,100,0.18);box-shadow:inset 0 0 0 1.5px rgba(220,240,120,0.25);filter:blur(0.6px)"></div><div class="abs" style="left:113px;top:601px;width:11px;height:11px;border-radius:50%;background:rgba(210,230,100,0.18);box-shadow:inset 0 0 0 1.5px rgba(220,240,120,0.25);filter:blur(0.6px)"></div><div class="abs" style="left:263px;top:648px;width:12px;height:12px;border-radius:50%;background:rgba(210,230,100,0.18);box-shadow:inset 0 0 0 1.5px rgba(220,240,120,0.25);filter:blur(0.6px)"></div><div class="abs" style="left:278px;top:608px;width:17px;height:17px;border-radius:50%;background:rgba(210,230,100,0.18);box-shadow:inset 0 0 0 1.5px rgba(220,240,120,0.25);filter:blur(0.6px)"></div><div class="abs" style="left:292px;top:626px;width:18px;height:18px;border-radius:50%;background:rgba(210,230,100,0.18);box-shadow:inset 0 0 0 1.5px rgba(220,240,120,0.25);filter:blur(0.6px)"></div><div class="abs" style="left:186px;top:588px;width:15px;height:15px;border-radius:50%;background:rgba(210,230,100,0.18);box-shadow:inset 0 0 0 1.5px rgba(220,240,120,0.25);filter:blur(0.6px)"></div><svg class="abs" style="left:0;top:661px" width="331" height="174" viewBox="0 0 331 174">
<defs><linearGradient id="wg" x1="0" y1="0" x2="1" y2="1"><stop offset="0" stop-color="#8e8770"/><stop offset="0.5" stop-color="#a09984"/><stop offset="1" stop-color="#aca590"/></linearGradient></defs>
<rect width="331" height="174" fill="url(#wg)"/>
<defs><linearGradient id="moss" x1="0" y1="0" x2="0" y2="1"><stop offset="0" stop-color="#6a7040" stop-opacity="0.22"/><stop offset="1" stop-color="#6a7040" stop-opacity="0"/></linearGradient></defs><rect width="331" height="90" fill="url(#moss)"/>
<line x1="8.8" y1="29.3" x2="189.2" y2="-66.7" stroke="#cfc6a8" stroke-opacity="0.29" stroke-width="2.0"/><line x1="-78.7" y1="299.3" x2="19.9" y2="246.9" stroke="#cfc6a8" stroke-opacity="0.22" stroke-width="1.0"/><line x1="298.7" y1="205.9" x2="460.0" y2="120.1" stroke="#3a3020" stroke-opacity="0.37" stroke-width="0.8"/><line x1="55.2" y1="143.5" x2="178.3" y2="78.0" stroke="#cfc6a8" stroke-opacity="0.16" stroke-width="2.0"/><line x1="-43.6" y1="8.6" x2="139.9" y2="-89.0" stroke="#3a3020" stroke-opacity="0.36" stroke-width="1.5"/><line x1="119.2" y1="-31.8" x2="182.0" y2="-65.2" stroke="#cfc6a8" stroke-opacity="0.25" stroke-width="1.0"/><line x1="196.9" y1="-24.4" x2="379.4" y2="-121.4" stroke="#3a3020" stroke-opacity="0.19" stroke-width="1.0"/><line x1="259.9" y1="236.4" x2="325.5" y2="201.5" stroke="#3a3020" stroke-opacity="0.28" stroke-width="0.8"/><line x1="126.1" y1="347.7" x2="214.3" y2="300.8" stroke="#3a3020" stroke-opacity="0.43" stroke-width="2.0"/><line x1="215.1" y1="163.5" x2="434.5" y2="46.8" stroke="#3a3020" stroke-opacity="0.15" stroke-width="1.2"/><line x1="134.6" y1="168.3" x2="272.1" y2="95.2" stroke="#3a3020" stroke-opacity="0.32" stroke-width="2.5"/><line x1="63.1" y1="93.8" x2="269.7" y2="-16.0" stroke="#3a3020" stroke-opacity="0.18" stroke-width="0.8"/><line x1="299.4" y1="105.6" x2="359.7" y2="73.5" stroke="#3a3020" stroke-opacity="0.18" stroke-width="1.2"/><line x1="289.4" y1="140.1" x2="502.0" y2="27.0" stroke="#cfc6a8" stroke-opacity="0.35" stroke-width="1.0"/><line x1="283.0" y1="130.9" x2="404.8" y2="66.2" stroke="#5a5a30" stroke-opacity="0.22" stroke-width="1.0"/><line x1="150.9" y1="117.7" x2="262.7" y2="58.3" stroke="#5a5a30" stroke-opacity="0.15" stroke-width="1.0"/><line x1="270.7" y1="131.1" x2="425.1" y2="49.0" stroke="#3a3020" stroke-opacity="0.22" stroke-width="2.5"/><line x1="59.0" y1="-25.4" x2="260.1" y2="-132.4" stroke="#3a3020" stroke-opacity="0.14" stroke-width="1.0"/><line x1="187.3" y1="373.0" x2="390.8" y2="264.8" stroke="#3a3020" stroke-opacity="0.17" stroke-width="2.5"/><line x1="-16.8" y1="161.2" x2="81.3" y2="109.0" stroke="#5a5a30" stroke-opacity="0.17" stroke-width="1.0"/><line x1="46.6" y1="284.6" x2="176.9" y2="215.3" stroke="#cfc6a8" stroke-opacity="0.40" stroke-width="2.5"/><line x1="214.1" y1="75.9" x2="292.0" y2="34.5" stroke="#3a3020" stroke-opacity="0.16" stroke-width="0.6"/><line x1="25.7" y1="97.0" x2="131.0" y2="41.0" stroke="#5a5a30" stroke-opacity="0.22" stroke-width="1.0"/><line x1="-41.4" y1="362.7" x2="-10.0" y2="346.0" stroke="#3a3020" stroke-opacity="0.15" stroke-width="1.0"/><line x1="35.6" y1="147.7" x2="121.2" y2="102.2" stroke="#3a3020" stroke-opacity="0.16" stroke-width="1.0"/><line x1="-11.7" y1="355.7" x2="50.5" y2="322.6" stroke="#3a3020" stroke-opacity="0.19" stroke-width="2.0"/><line x1="226.4" y1="118.7" x2="263.9" y2="98.7" stroke="#cfc6a8" stroke-opacity="0.30" stroke-width="0.6"/><line x1="234.0" y1="350.3" x2="294.5" y2="318.1" stroke="#3a3020" stroke-opacity="0.14" stroke-width="2.0"/><line x1="226.5" y1="258.8" x2="300.6" y2="219.5" stroke="#5a5a30" stroke-opacity="0.22" stroke-width="1.2"/><line x1="121.4" y1="25.6" x2="259.2" y2="-47.7" stroke="#cfc6a8" stroke-opacity="0.39" stroke-width="1.2"/><line x1="317.5" y1="189.1" x2="404.2" y2="143.0" stroke="#cfc6a8" stroke-opacity="0.37" stroke-width="0.6"/><line x1="321.5" y1="253.8" x2="417.0" y2="203.0" stroke="#3a3020" stroke-opacity="0.39" stroke-width="1.0"/><line x1="-49.9" y1="93.6" x2="134.8" y2="-4.6" stroke="#3a3020" stroke-opacity="0.15" stroke-width="2.0"/><line x1="199.4" y1="279.2" x2="363.0" y2="192.2" stroke="#cfc6a8" stroke-opacity="0.43" stroke-width="2.5"/><line x1="-69.7" y1="157.8" x2="85.2" y2="75.4" stroke="#5a5a30" stroke-opacity="0.11" stroke-width="2.0"/><line x1="217.5" y1="-22.3" x2="332.5" y2="-83.5" stroke="#cfc6a8" stroke-opacity="0.40" stroke-width="1.2"/><line x1="295.9" y1="59.3" x2="449.5" y2="-22.4" stroke="#3a3020" stroke-opacity="0.20" stroke-width="2.0"/><line x1="286.0" y1="-24.3" x2="463.9" y2="-118.9" stroke="#3a3020" stroke-opacity="0.36" stroke-width="1.0"/><line x1="78.6" y1="223.3" x2="224.5" y2="145.7" stroke="#3a3020" stroke-opacity="0.42" stroke-width="1.2"/><line x1="279.9" y1="306.4" x2="445.5" y2="218.4" stroke="#3a3020" stroke-opacity="0.19" stroke-width="0.6"/><line x1="307.8" y1="-1.9" x2="478.5" y2="-92.7" stroke="#3a3020" stroke-opacity="0.22" stroke-width="1.0"/><line x1="98.1" y1="154.2" x2="256.4" y2="70.0" stroke="#5a5a30" stroke-opacity="0.13" stroke-width="0.8"/><line x1="52.4" y1="116.2" x2="128.3" y2="75.9" stroke="#3a3020" stroke-opacity="0.43" stroke-width="1.0"/><line x1="18.0" y1="315.1" x2="178.1" y2="229.9" stroke="#5a5a30" stroke-opacity="0.20" stroke-width="1.0"/><line x1="99.6" y1="260.8" x2="245.9" y2="183.0" stroke="#5a5a30" stroke-opacity="0.19" stroke-width="1.0"/><line x1="-39.3" y1="77.9" x2="176.6" y2="-36.9" stroke="#cfc6a8" stroke-opacity="0.34" stroke-width="1.0"/><line x1="209.6" y1="50.4" x2="239.8" y2="34.3" stroke="#cfc6a8" stroke-opacity="0.43" stroke-width="1.5"/><line x1="104.8" y1="170.5" x2="323.8" y2="54.1" stroke="#3a3020" stroke-opacity="0.27" stroke-width="0.6"/><line x1="106.6" y1="355.5" x2="306.9" y2="249.0" stroke="#3a3020" stroke-opacity="0.22" stroke-width="1.0"/><line x1="97.6" y1="115.4" x2="287.4" y2="14.5" stroke="#cfc6a8" stroke-opacity="0.42" stroke-width="1.0"/><line x1="12.5" y1="89.6" x2="194.9" y2="-7.3" stroke="#3a3020" stroke-opacity="0.30" stroke-width="2.0"/><line x1="159.2" y1="314.3" x2="201.3" y2="291.9" stroke="#5a5a30" stroke-opacity="0.10" stroke-width="2.5"/><line x1="136.4" y1="337.9" x2="266.9" y2="268.5" stroke="#3a3020" stroke-opacity="0.28" stroke-width="1.0"/><line x1="38.4" y1="166.4" x2="189.2" y2="86.2" stroke="#3a3020" stroke-opacity="0.17" stroke-width="1.5"/><line x1="-39.7" y1="-36.1" x2="147.7" y2="-135.8" stroke="#cfc6a8" stroke-opacity="0.21" stroke-width="0.8"/><line x1="123.5" y1="111.3" x2="282.2" y2="26.9" stroke="#3a3020" stroke-opacity="0.13" stroke-width="1.5"/><line x1="67.4" y1="234.3" x2="142.5" y2="194.4" stroke="#3a3020" stroke-opacity="0.20" stroke-width="1.0"/><line x1="-47.8" y1="43.6" x2="139.4" y2="-56.0" stroke="#cfc6a8" stroke-opacity="0.31" stroke-width="1.0"/><line x1="180.2" y1="49.8" x2="331.5" y2="-30.7" stroke="#cfc6a8" stroke-opacity="0.33" stroke-width="0.6"/><line x1="269.7" y1="-31.2" x2="452.9" y2="-128.6" stroke="#3a3020" stroke-opacity="0.17" stroke-width="1.5"/><line x1="291.0" y1="340.7" x2="421.1" y2="271.5" stroke="#3a3020" stroke-opacity="0.38" stroke-width="0.6"/><line x1="305.0" y1="341.6" x2="485.7" y2="245.5" stroke="#3a3020" stroke-opacity="0.43" stroke-width="1.2"/><line x1="-69.7" y1="-35.3" x2="29.8" y2="-88.2" stroke="#3a3020" stroke-opacity="0.21" stroke-width="1.5"/><line x1="282.4" y1="274.4" x2="349.0" y2="238.9" stroke="#5a5a30" stroke-opacity="0.21" stroke-width="1.0"/><line x1="282.8" y1="379.2" x2="379.7" y2="327.7" stroke="#cfc6a8" stroke-opacity="0.37" stroke-width="1.2"/><line x1="196.1" y1="-5.2" x2="391.0" y2="-108.8" stroke="#cfc6a8" stroke-opacity="0.26" stroke-width="2.0"/><line x1="230.4" y1="200.6" x2="448.1" y2="84.9" stroke="#5a5a30" stroke-opacity="0.29" stroke-width="0.6"/><line x1="72.2" y1="270.8" x2="291.3" y2="154.4" stroke="#3a3020" stroke-opacity="0.30" stroke-width="0.8"/><line x1="183.4" y1="84.4" x2="359.6" y2="-9.3" stroke="#3a3020" stroke-opacity="0.26" stroke-width="1.0"/><line x1="75.4" y1="275.6" x2="197.0" y2="210.9" stroke="#3a3020" stroke-opacity="0.26" stroke-width="1.0"/><line x1="58.1" y1="71.5" x2="170.2" y2="11.9" stroke="#3a3020" stroke-opacity="0.38" stroke-width="2.5"/><line x1="74.9" y1="86.8" x2="177.8" y2="32.1" stroke="#cfc6a8" stroke-opacity="0.45" stroke-width="1.0"/><line x1="0.9" y1="-38.4" x2="71.6" y2="-76.0" stroke="#cfc6a8" stroke-opacity="0.45" stroke-width="1.2"/><line x1="296.6" y1="268.3" x2="348.8" y2="240.6" stroke="#cfc6a8" stroke-opacity="0.16" stroke-width="2.5"/><line x1="166.0" y1="100.2" x2="327.1" y2="14.5" stroke="#3a3020" stroke-opacity="0.33" stroke-width="1.5"/><line x1="241.4" y1="323.4" x2="421.9" y2="227.4" stroke="#3a3020" stroke-opacity="0.20" stroke-width="0.8"/><line x1="268.8" y1="349.8" x2="440.2" y2="258.7" stroke="#cfc6a8" stroke-opacity="0.25" stroke-width="1.0"/><line x1="28.8" y1="64.5" x2="187.9" y2="-20.1" stroke="#3a3020" stroke-opacity="0.39" stroke-width="1.0"/><line x1="237.0" y1="84.2" x2="359.6" y2="19.0" stroke="#cfc6a8" stroke-opacity="0.19" stroke-width="1.0"/><line x1="-76.2" y1="-26.5" x2="114.0" y2="-127.6" stroke="#5a5a30" stroke-opacity="0.20" stroke-width="1.5"/><line x1="-29.3" y1="79.2" x2="168.2" y2="-25.9" stroke="#cfc6a8" stroke-opacity="0.27" stroke-width="1.2"/><line x1="209.5" y1="235.0" x2="330.8" y2="170.5" stroke="#5a5a30" stroke-opacity="0.15" stroke-width="0.6"/><line x1="310.9" y1="185.8" x2="365.1" y2="156.9" stroke="#3a3020" stroke-opacity="0.13" stroke-width="1.5"/><line x1="131.2" y1="128.8" x2="201.1" y2="91.6" stroke="#cfc6a8" stroke-opacity="0.29" stroke-width="2.5"/><line x1="266.7" y1="291.6" x2="443.7" y2="197.5" stroke="#5a5a30" stroke-opacity="0.28" stroke-width="0.6"/><line x1="-74.5" y1="338.9" x2="4.7" y2="296.8" stroke="#3a3020" stroke-opacity="0.17" stroke-width="0.8"/><line x1="-3.3" y1="250.8" x2="52.7" y2="221.0" stroke="#3a3020" stroke-opacity="0.14" stroke-width="1.2"/><line x1="139.7" y1="222.2" x2="188.6" y2="196.1" stroke="#3a3020" stroke-opacity="0.16" stroke-width="1.0"/><line x1="141.4" y1="130.2" x2="184.4" y2="107.3" stroke="#3a3020" stroke-opacity="0.35" stroke-width="0.8"/><line x1="244.1" y1="61.9" x2="451.0" y2="-48.1" stroke="#3a3020" stroke-opacity="0.26" stroke-width="0.8"/><line x1="251.5" y1="253.4" x2="411.4" y2="168.3" stroke="#3a3020" stroke-opacity="0.44" stroke-width="0.6"/><line x1="286.4" y1="331.5" x2="462.7" y2="237.7" stroke="#3a3020" stroke-opacity="0.28" stroke-width="2.0"/><line x1="240.2" y1="203.5" x2="316.6" y2="162.8" stroke="#3a3020" stroke-opacity="0.33" stroke-width="1.0"/><line x1="60.1" y1="158.1" x2="215.6" y2="75.5" stroke="#cfc6a8" stroke-opacity="0.20" stroke-width="1.2"/><line x1="-32.6" y1="235.5" x2="107.5" y2="161.0" stroke="#5a5a30" stroke-opacity="0.16" stroke-width="2.0"/><line x1="46.7" y1="164.4" x2="95.0" y2="138.8" stroke="#cfc6a8" stroke-opacity="0.19" stroke-width="1.0"/><line x1="226.5" y1="238.0" x2="413.7" y2="138.5" stroke="#5a5a30" stroke-opacity="0.11" stroke-width="2.5"/><line x1="148.7" y1="175.3" x2="245.8" y2="123.7" stroke="#cfc6a8" stroke-opacity="0.29" stroke-width="0.8"/><line x1="98.7" y1="43.3" x2="274.9" y2="-50.3" stroke="#cfc6a8" stroke-opacity="0.33" stroke-width="2.5"/><line x1="-12.0" y1="-32.1" x2="201.7" y2="-145.8" stroke="#3a3020" stroke-opacity="0.19" stroke-width="1.0"/><line x1="22.2" y1="-34.5" x2="117.6" y2="-85.2" stroke="#5a5a30" stroke-opacity="0.29" stroke-width="1.0"/><line x1="261.9" y1="315.3" x2="422.7" y2="229.8" stroke="#3a3020" stroke-opacity="0.32" stroke-width="1.0"/><line x1="187.9" y1="161.7" x2="270.3" y2="117.8" stroke="#3a3020" stroke-opacity="0.42" stroke-width="1.5"/><line x1="329.7" y1="275.0" x2="419.8" y2="227.1" stroke="#5a5a30" stroke-opacity="0.15" stroke-width="0.8"/><line x1="157.5" y1="119.5" x2="362.0" y2="10.8" stroke="#cfc6a8" stroke-opacity="0.16" stroke-width="1.0"/><line x1="287.3" y1="49.0" x2="473.7" y2="-50.1" stroke="#cfc6a8" stroke-opacity="0.41" stroke-width="1.0"/><line x1="7.0" y1="370.9" x2="65.9" y2="339.6" stroke="#cfc6a8" stroke-opacity="0.35" stroke-width="2.5"/><line x1="-26.8" y1="338.9" x2="74.7" y2="285.0" stroke="#cfc6a8" stroke-opacity="0.24" stroke-width="2.0"/><line x1="-34.4" y1="17.5" x2="84.1" y2="-45.5" stroke="#cfc6a8" stroke-opacity="0.20" stroke-width="0.6"/><line x1="41.6" y1="-8.7" x2="154.7" y2="-68.9" stroke="#3a3020" stroke-opacity="0.29" stroke-width="1.5"/><line x1="147.7" y1="259.0" x2="228.5" y2="216.1" stroke="#cfc6a8" stroke-opacity="0.44" stroke-width="2.0"/><line x1="25.7" y1="-37.7" x2="173.6" y2="-116.3" stroke="#cfc6a8" stroke-opacity="0.44" stroke-width="2.0"/><line x1="61.8" y1="91.3" x2="270.1" y2="-19.5" stroke="#cfc6a8" stroke-opacity="0.19" stroke-width="1.2"/><line x1="242.0" y1="108.0" x2="269.2" y2="93.5" stroke="#cfc6a8" stroke-opacity="0.23" stroke-width="1.0"/><line x1="127.4" y1="103.0" x2="162.1" y2="84.5" stroke="#cfc6a8" stroke-opacity="0.36" stroke-width="1.0"/><line x1="269.1" y1="-27.8" x2="460.1" y2="-129.3" stroke="#cfc6a8" stroke-opacity="0.32" stroke-width="1.5"/><line x1="-8.6" y1="221.1" x2="160.1" y2="131.4" stroke="#cfc6a8" stroke-opacity="0.21" stroke-width="1.0"/><line x1="245.3" y1="133.2" x2="437.9" y2="30.8" stroke="#3a3020" stroke-opacity="0.25" stroke-width="1.5"/><line x1="45.0" y1="273.3" x2="155.7" y2="214.5" stroke="#3a3020" stroke-opacity="0.23" stroke-width="0.6"/><line x1="110.7" y1="327.3" x2="275.5" y2="239.7" stroke="#cfc6a8" stroke-opacity="0.42" stroke-width="0.8"/><line x1="323.5" y1="352.1" x2="521.0" y2="247.1" stroke="#3a3020" stroke-opacity="0.32" stroke-width="1.0"/><line x1="291.7" y1="342.9" x2="499.4" y2="232.4" stroke="#5a5a30" stroke-opacity="0.21" stroke-width="0.8"/><line x1="235.0" y1="303.2" x2="453.4" y2="187.1" stroke="#cfc6a8" stroke-opacity="0.15" stroke-width="0.8"/><line x1="310.8" y1="178.8" x2="524.8" y2="65.0" stroke="#cfc6a8" stroke-opacity="0.17" stroke-width="0.6"/><line x1="83.7" y1="145.1" x2="195.8" y2="85.5" stroke="#3a3020" stroke-opacity="0.32" stroke-width="2.0"/><line x1="319.6" y1="274.9" x2="404.7" y2="229.6" stroke="#cfc6a8" stroke-opacity="0.34" stroke-width="1.0"/><line x1="48.8" y1="349.4" x2="126.2" y2="308.3" stroke="#3a3020" stroke-opacity="0.26" stroke-width="1.0"/><line x1="294.6" y1="108.0" x2="445.7" y2="27.7" stroke="#3a3020" stroke-opacity="0.29" stroke-width="0.8"/><line x1="263.9" y1="333.2" x2="418.3" y2="251.1" stroke="#3a3020" stroke-opacity="0.22" stroke-width="2.5"/><line x1="173.1" y1="158.7" x2="344.4" y2="67.7" stroke="#cfc6a8" stroke-opacity="0.24" stroke-width="1.0"/><line x1="28.6" y1="184.4" x2="185.5" y2="101.0" stroke="#cfc6a8" stroke-opacity="0.43" stroke-width="1.0"/><line x1="29.1" y1="370.3" x2="201.3" y2="278.7" stroke="#3a3020" stroke-opacity="0.36" stroke-width="1.0"/><line x1="275.7" y1="137.9" x2="427.2" y2="57.3" stroke="#3a3020" stroke-opacity="0.20" stroke-width="1.2"/><line x1="-54.3" y1="224.1" x2="165.2" y2="107.4" stroke="#cfc6a8" stroke-opacity="0.32" stroke-width="0.8"/><line x1="318.7" y1="31.5" x2="497.0" y2="-63.3" stroke="#cfc6a8" stroke-opacity="0.32" stroke-width="0.6"/><line x1="268.3" y1="59.6" x2="371.8" y2="4.5" stroke="#cfc6a8" stroke-opacity="0.45" stroke-width="2.0"/><line x1="40.0" y1="219.4" x2="139.6" y2="166.4" stroke="#3a3020" stroke-opacity="0.13" stroke-width="1.0"/><line x1="272.3" y1="42.7" x2="394.3" y2="-22.2" stroke="#5a5a30" stroke-opacity="0.23" stroke-width="1.2"/><line x1="73.8" y1="206.4" x2="166.5" y2="157.1" stroke="#3a3020" stroke-opacity="0.24" stroke-width="1.0"/><line x1="288.1" y1="139.7" x2="482.4" y2="36.4" stroke="#3a3020" stroke-opacity="0.17" stroke-width="0.6"/><line x1="49.6" y1="3.4" x2="178.3" y2="-65.1" stroke="#3a3020" stroke-opacity="0.31" stroke-width="1.0"/><line x1="196.7" y1="346.0" x2="383.7" y2="246.6" stroke="#3a3020" stroke-opacity="0.14" stroke-width="0.8"/><line x1="257.3" y1="198.7" x2="373.9" y2="136.7" stroke="#3a3020" stroke-opacity="0.25" stroke-width="1.0"/><line x1="76.2" y1="-22.4" x2="224.3" y2="-101.1" stroke="#3a3020" stroke-opacity="0.43" stroke-width="1.0"/><line x1="4.1" y1="28.9" x2="130.4" y2="-38.3" stroke="#3a3020" stroke-opacity="0.34" stroke-width="2.0"/><line x1="317.1" y1="35.4" x2="499.1" y2="-61.3" stroke="#5a5a30" stroke-opacity="0.11" stroke-width="0.8"/><line x1="-45.4" y1="101.6" x2="122.3" y2="12.4" stroke="#cfc6a8" stroke-opacity="0.29" stroke-width="2.0"/><line x1="-43.5" y1="128.8" x2="146.7" y2="27.7" stroke="#3a3020" stroke-opacity="0.29" stroke-width="1.2"/><line x1="233.0" y1="151.6" x2="431.2" y2="46.3" stroke="#cfc6a8" stroke-opacity="0.39" stroke-width="2.0"/><line x1="237.1" y1="296.5" x2="407.5" y2="205.9" stroke="#3a3020" stroke-opacity="0.42" stroke-width="2.0"/><line x1="246.8" y1="201.3" x2="356.2" y2="143.1" stroke="#3a3020" stroke-opacity="0.21" stroke-width="1.0"/><line x1="308.7" y1="288.0" x2="510.9" y2="180.5" stroke="#3a3020" stroke-opacity="0.23" stroke-width="2.0"/><line x1="258.8" y1="39.7" x2="418.2" y2="-45.1" stroke="#cfc6a8" stroke-opacity="0.24" stroke-width="1.5"/><line x1="-31.7" y1="-29.0" x2="91.5" y2="-94.5" stroke="#5a5a30" stroke-opacity="0.11" stroke-width="0.8"/><line x1="55.4" y1="234.6" x2="126.1" y2="197.0" stroke="#cfc6a8" stroke-opacity="0.44" stroke-width="1.5"/><line x1="-48.3" y1="69.0" x2="50.4" y2="16.5" stroke="#3a3020" stroke-opacity="0.37" stroke-width="1.0"/><line x1="229.2" y1="129.9" x2="283.9" y2="100.8" stroke="#3a3020" stroke-opacity="0.42" stroke-width="2.0"/><line x1="305.2" y1="297.6" x2="368.8" y2="263.8" stroke="#5a5a30" stroke-opacity="0.24" stroke-width="2.0"/><line x1="-10.9" y1="294.5" x2="157.4" y2="205.0" stroke="#3a3020" stroke-opacity="0.19" stroke-width="1.0"/><line x1="153.2" y1="-18.4" x2="359.8" y2="-128.3" stroke="#cfc6a8" stroke-opacity="0.37" stroke-width="2.0"/><line x1="280.5" y1="78.1" x2="455.1" y2="-14.7" stroke="#cfc6a8" stroke-opacity="0.42" stroke-width="0.8"/><line x1="93.8" y1="-24.8" x2="132.3" y2="-45.2" stroke="#5a5a30" stroke-opacity="0.26" stroke-width="1.0"/><line x1="-27.4" y1="372.7" x2="187.2" y2="258.5" stroke="#3a3020" stroke-opacity="0.30" stroke-width="1.2"/><line x1="211.8" y1="191.7" x2="415.1" y2="83.7" stroke="#3a3020" stroke-opacity="0.35" stroke-width="2.0"/><line x1="27.7" y1="203.9" x2="115.8" y2="157.0" stroke="#cfc6a8" stroke-opacity="0.36" stroke-width="1.2"/><line x1="-10.5" y1="37.3" x2="23.1" y2="19.5" stroke="#3a3020" stroke-opacity="0.32" stroke-width="0.6"/><line x1="244.8" y1="70.8" x2="461.4" y2="-44.3" stroke="#3a3020" stroke-opacity="0.29" stroke-width="1.0"/><line x1="115.0" y1="68.8" x2="293.7" y2="-26.2" stroke="#cfc6a8" stroke-opacity="0.25" stroke-width="0.8"/><line x1="59.8" y1="65.3" x2="189.8" y2="-3.8" stroke="#5a5a30" stroke-opacity="0.25" stroke-width="2.5"/><line x1="186.2" y1="101.5" x2="337.1" y2="21.3" stroke="#3a3020" stroke-opacity="0.28" stroke-width="0.6"/><line x1="322.7" y1="358.2" x2="531.7" y2="247.0" stroke="#3a3020" stroke-opacity="0.12" stroke-width="1.0"/><line x1="184.5" y1="-9.9" x2="338.8" y2="-91.9" stroke="#3a3020" stroke-opacity="0.13" stroke-width="1.0"/><line x1="118.5" y1="53.9" x2="154.9" y2="34.6" stroke="#3a3020" stroke-opacity="0.24" stroke-width="1.0"/><line x1="35.0" y1="20.6" x2="131.4" y2="-30.6" stroke="#3a3020" stroke-opacity="0.34" stroke-width="1.5"/><line x1="278.5" y1="115.6" x2="311.4" y2="98.2" stroke="#5a5a30" stroke-opacity="0.27" stroke-width="1.0"/><line x1="157.4" y1="289.5" x2="263.1" y2="233.4" stroke="#cfc6a8" stroke-opacity="0.34" stroke-width="1.0"/><line x1="225.4" y1="231.3" x2="261.2" y2="212.2" stroke="#3a3020" stroke-opacity="0.30" stroke-width="1.5"/><line x1="106.3" y1="-24.5" x2="234.8" y2="-92.8" stroke="#3a3020" stroke-opacity="0.34" stroke-width="2.5"/><line x1="-19.2" y1="309.2" x2="176.8" y2="205.0" stroke="#3a3020" stroke-opacity="0.33" stroke-width="2.0"/><line x1="149.6" y1="177.3" x2="273.9" y2="111.2" stroke="#3a3020" stroke-opacity="0.16" stroke-width="0.6"/><line x1="-72.6" y1="94.0" x2="1.9" y2="54.4" stroke="#5a5a30" stroke-opacity="0.16" stroke-width="2.0"/><line x1="219.1" y1="157.7" x2="312.5" y2="108.0" stroke="#3a3020" stroke-opacity="0.23" stroke-width="1.0"/><line x1="11.4" y1="33.8" x2="164.4" y2="-47.6" stroke="#3a3020" stroke-opacity="0.39" stroke-width="2.0"/><line x1="170.5" y1="38.7" x2="270.2" y2="-14.3" stroke="#cfc6a8" stroke-opacity="0.30" stroke-width="1.0"/><line x1="273.1" y1="-7.9" x2="406.6" y2="-78.9" stroke="#cfc6a8" stroke-opacity="0.38" stroke-width="1.0"/><line x1="1.4" y1="377.7" x2="88.2" y2="331.5" stroke="#3a3020" stroke-opacity="0.22" stroke-width="2.5"/><line x1="73.6" y1="217.6" x2="231.6" y2="133.6" stroke="#cfc6a8" stroke-opacity="0.39" stroke-width="1.0"/><line x1="79.6" y1="294.6" x2="192.9" y2="234.3" stroke="#3a3020" stroke-opacity="0.37" stroke-width="0.6"/><line x1="-67.2" y1="293.6" x2="5.4" y2="254.9" stroke="#cfc6a8" stroke-opacity="0.37" stroke-width="1.0"/><line x1="83.3" y1="243.3" x2="230.6" y2="164.9" stroke="#3a3020" stroke-opacity="0.32" stroke-width="2.0"/><line x1="199.0" y1="-7.5" x2="304.4" y2="-63.6" stroke="#cfc6a8" stroke-opacity="0.38" stroke-width="0.6"/><line x1="1.3" y1="-25.3" x2="179.5" y2="-120.0" stroke="#cfc6a8" stroke-opacity="0.42" stroke-width="2.5"/><line x1="61.7" y1="316.4" x2="239.9" y2="221.6" stroke="#cfc6a8" stroke-opacity="0.34" stroke-width="0.6"/><line x1="216.0" y1="90.4" x2="255.6" y2="69.4" stroke="#3a3020" stroke-opacity="0.26" stroke-width="0.8"/><line x1="-63.2" y1="208.4" x2="6.5" y2="171.4" stroke="#3a3020" stroke-opacity="0.43" stroke-width="2.5"/><line x1="108.6" y1="-18.5" x2="150.3" y2="-40.6" stroke="#5a5a30" stroke-opacity="0.23" stroke-width="1.2"/><line x1="294.0" y1="231.7" x2="437.1" y2="155.6" stroke="#3a3020" stroke-opacity="0.33" stroke-width="1.5"/><line x1="280.0" y1="-24.6" x2="472.4" y2="-126.9" stroke="#3a3020" stroke-opacity="0.37" stroke-width="1.0"/><line x1="-73.2" y1="114.4" x2="127.1" y2="7.9" stroke="#3a3020" stroke-opacity="0.44" stroke-width="1.0"/><line x1="102.5" y1="251.3" x2="149.0" y2="226.6" stroke="#cfc6a8" stroke-opacity="0.25" stroke-width="1.0"/><line x1="108.5" y1="107.3" x2="259.2" y2="27.1" stroke="#3a3020" stroke-opacity="0.18" stroke-width="1.0"/><line x1="-14.3" y1="297.3" x2="19.3" y2="279.4" stroke="#3a3020" stroke-opacity="0.31" stroke-width="0.8"/><line x1="73.3" y1="294.5" x2="153.5" y2="251.9" stroke="#3a3020" stroke-opacity="0.21" stroke-width="0.8"/><line x1="125.7" y1="318.7" x2="333.2" y2="208.4" stroke="#3a3020" stroke-opacity="0.20" stroke-width="0.8"/><line x1="98.9" y1="35.6" x2="274.3" y2="-57.7" stroke="#3a3020" stroke-opacity="0.22" stroke-width="1.2"/><line x1="245.8" y1="140.7" x2="324.5" y2="98.9" stroke="#3a3020" stroke-opacity="0.41" stroke-width="2.0"/><line x1="279.5" y1="123.7" x2="460.5" y2="27.5" stroke="#cfc6a8" stroke-opacity="0.35" stroke-width="2.0"/><line x1="105.2" y1="375.2" x2="271.8" y2="286.6" stroke="#3a3020" stroke-opacity="0.38" stroke-width="1.0"/><line x1="-0.5" y1="12.2" x2="151.0" y2="-68.3" stroke="#cfc6a8" stroke-opacity="0.23" stroke-width="1.2"/><line x1="58.9" y1="1.8" x2="93.5" y2="-16.6" stroke="#3a3020" stroke-opacity="0.45" stroke-width="1.0"/><line x1="130.2" y1="155.5" x2="255.3" y2="88.9" stroke="#cfc6a8" stroke-opacity="0.25" stroke-width="0.8"/><line x1="247.8" y1="377.5" x2="275.0" y2="363.0" stroke="#3a3020" stroke-opacity="0.43" stroke-width="1.0"/><line x1="-25.9" y1="264.3" x2="6.1" y2="247.4" stroke="#5a5a30" stroke-opacity="0.30" stroke-width="2.5"/><line x1="251.2" y1="308.3" x2="315.8" y2="273.9" stroke="#cfc6a8" stroke-opacity="0.41" stroke-width="1.0"/><line x1="255.3" y1="295.8" x2="309.0" y2="267.3" stroke="#3a3020" stroke-opacity="0.42" stroke-width="1.2"/><line x1="79.9" y1="364.7" x2="204.9" y2="298.2" stroke="#cfc6a8" stroke-opacity="0.21" stroke-width="1.5"/><line x1="259.6" y1="341.3" x2="372.9" y2="281.1" stroke="#5a5a30" stroke-opacity="0.18" stroke-width="0.8"/><line x1="159.9" y1="110.8" x2="337.5" y2="16.4" stroke="#3a3020" stroke-opacity="0.43" stroke-width="1.5"/><line x1="158.5" y1="240.2" x2="259.5" y2="186.5" stroke="#3a3020" stroke-opacity="0.24" stroke-width="2.5"/><line x1="-4.0" y1="-36.3" x2="158.6" y2="-122.8" stroke="#3a3020" stroke-opacity="0.38" stroke-width="1.0"/><line x1="141.9" y1="81.6" x2="230.2" y2="34.7" stroke="#cfc6a8" stroke-opacity="0.39" stroke-width="1.0"/><line x1="202.7" y1="124.0" x2="400.8" y2="18.7" stroke="#3a3020" stroke-opacity="0.32" stroke-width="0.6"/><line x1="-34.9" y1="133.9" x2="54.6" y2="86.4" stroke="#3a3020" stroke-opacity="0.29" stroke-width="1.5"/><line x1="11.0" y1="-25.2" x2="50.3" y2="-46.1" stroke="#3a3020" stroke-opacity="0.21" stroke-width="2.5"/><line x1="119.1" y1="-28.3" x2="284.2" y2="-116.1" stroke="#cfc6a8" stroke-opacity="0.17" stroke-width="1.0"/><line x1="91.1" y1="235.1" x2="278.1" y2="135.7" stroke="#5a5a30" stroke-opacity="0.18" stroke-width="1.2"/><line x1="-36.0" y1="240.9" x2="29.3" y2="206.2" stroke="#3a3020" stroke-opacity="0.43" stroke-width="1.0"/><line x1="20.3" y1="352.6" x2="185.5" y2="264.7" stroke="#cfc6a8" stroke-opacity="0.30" stroke-width="0.8"/><line x1="81.1" y1="-26.0" x2="290.5" y2="-137.4" stroke="#3a3020" stroke-opacity="0.36" stroke-width="0.8"/><line x1="-16.2" y1="62.6" x2="23.8" y2="41.3" stroke="#cfc6a8" stroke-opacity="0.39" stroke-width="2.0"/><line x1="300.5" y1="142.4" x2="349.2" y2="116.5" stroke="#3a3020" stroke-opacity="0.17" stroke-width="1.0"/><line x1="-60.4" y1="166.6" x2="53.0" y2="106.2" stroke="#3a3020" stroke-opacity="0.32" stroke-width="2.5"/><line x1="167.8" y1="74.7" x2="223.1" y2="45.3" stroke="#cfc6a8" stroke-opacity="0.18" stroke-width="1.0"/><line x1="113.3" y1="1.9" x2="186.1" y2="-36.9" stroke="#3a3020" stroke-opacity="0.37" stroke-width="1.2"/><line x1="169.6" y1="-11.6" x2="285.2" y2="-73.1" stroke="#3a3020" stroke-opacity="0.42" stroke-width="2.0"/><line x1="193.9" y1="50.7" x2="286.2" y2="1.7" stroke="#5a5a30" stroke-opacity="0.28" stroke-width="1.5"/><line x1="122.7" y1="213.5" x2="157.2" y2="195.2" stroke="#cfc6a8" stroke-opacity="0.32" stroke-width="1.5"/><line x1="-44.9" y1="340.7" x2="46.7" y2="292.0" stroke="#3a3020" stroke-opacity="0.23" stroke-width="1.0"/><line x1="-43.4" y1="26.1" x2="91.8" y2="-45.7" stroke="#cfc6a8" stroke-opacity="0.31" stroke-width="1.2"/><line x1="73.7" y1="123.4" x2="257.1" y2="25.9" stroke="#cfc6a8" stroke-opacity="0.30" stroke-width="1.0"/><line x1="-70.8" y1="207.0" x2="129.3" y2="100.6" stroke="#3a3020" stroke-opacity="0.39" stroke-width="1.0"/><line x1="155.7" y1="38.2" x2="349.7" y2="-64.9" stroke="#3a3020" stroke-opacity="0.26" stroke-width="2.5"/><line x1="45.2" y1="34.1" x2="240.9" y2="-69.9" stroke="#cfc6a8" stroke-opacity="0.23" stroke-width="0.6"/><line x1="-37.1" y1="330.4" x2="151.1" y2="230.4" stroke="#3a3020" stroke-opacity="0.23" stroke-width="1.0"/><line x1="173.4" y1="-19.6" x2="268.9" y2="-70.4" stroke="#3a3020" stroke-opacity="0.18" stroke-width="1.0"/><line x1="-48.9" y1="9.1" x2="68.3" y2="-53.2" stroke="#cfc6a8" stroke-opacity="0.41" stroke-width="1.2"/><line x1="-5.9" y1="370.5" x2="93.3" y2="317.7" stroke="#cfc6a8" stroke-opacity="0.24" stroke-width="1.0"/><line x1="105.7" y1="272.2" x2="141.0" y2="253.4" stroke="#cfc6a8" stroke-opacity="0.38" stroke-width="2.5"/><line x1="124.6" y1="191.4" x2="195.1" y2="153.9" stroke="#3a3020" stroke-opacity="0.37" stroke-width="0.8"/><line x1="246.2" y1="253.9" x2="382.4" y2="181.5" stroke="#3a3020" stroke-opacity="0.25" stroke-width="1.0"/><line x1="-70.3" y1="41.6" x2="-32.5" y2="21.5" stroke="#cfc6a8" stroke-opacity="0.44" stroke-width="2.0"/><line x1="110.2" y1="171.1" x2="325.3" y2="56.8" stroke="#3a3020" stroke-opacity="0.26" stroke-width="0.6"/><line x1="136.3" y1="30.8" x2="311.3" y2="-62.2" stroke="#3a3020" stroke-opacity="0.18" stroke-width="1.0"/><line x1="292.1" y1="276.5" x2="441.6" y2="197.0" stroke="#cfc6a8" stroke-opacity="0.29" stroke-width="1.5"/><line x1="323.1" y1="21.1" x2="537.3" y2="-92.8" stroke="#cfc6a8" stroke-opacity="0.27" stroke-width="2.5"/><line x1="63.4" y1="305.4" x2="233.7" y2="214.8" stroke="#3a3020" stroke-opacity="0.36" stroke-width="1.0"/><line x1="-44.8" y1="229.6" x2="130.5" y2="136.4" stroke="#cfc6a8" stroke-opacity="0.26" stroke-width="1.2"/><line x1="-5.6" y1="12.8" x2="159.2" y2="-74.8" stroke="#5a5a30" stroke-opacity="0.13" stroke-width="1.5"/><line x1="254.7" y1="0.7" x2="291.1" y2="-18.7" stroke="#5a5a30" stroke-opacity="0.23" stroke-width="0.8"/><line x1="73.9" y1="215.0" x2="217.9" y2="138.4" stroke="#5a5a30" stroke-opacity="0.26" stroke-width="0.6"/><line x1="276.7" y1="244.2" x2="447.9" y2="153.2" stroke="#5a5a30" stroke-opacity="0.18" stroke-width="0.8"/><line x1="222.7" y1="65.9" x2="291.7" y2="29.2" stroke="#3a3020" stroke-opacity="0.13" stroke-width="1.0"/><line x1="90.1" y1="261.5" x2="269.7" y2="166.0" stroke="#5a5a30" stroke-opacity="0.14" stroke-width="0.8"/><line x1="82.3" y1="146.6" x2="159.8" y2="105.4" stroke="#3a3020" stroke-opacity="0.20" stroke-width="1.0"/><line x1="165.7" y1="116.9" x2="210.6" y2="93.0" stroke="#cfc6a8" stroke-opacity="0.19" stroke-width="2.0"/><line x1="10.9" y1="110.4" x2="177.3" y2="22.0" stroke="#cfc6a8" stroke-opacity="0.25" stroke-width="2.0"/><line x1="106.5" y1="210.8" x2="226.4" y2="147.0" stroke="#3a3020" stroke-opacity="0.14" stroke-width="0.8"/><line x1="225.0" y1="375.8" x2="366.5" y2="300.5" stroke="#3a3020" stroke-opacity="0.37" stroke-width="1.0"/><line x1="242.3" y1="223.2" x2="300.2" y2="192.4" stroke="#3a3020" stroke-opacity="0.19" stroke-width="0.8"/><line x1="61.3" y1="227.8" x2="94.8" y2="210.0" stroke="#cfc6a8" stroke-opacity="0.22" stroke-width="2.0"/><line x1="57.1" y1="356.4" x2="269.1" y2="243.7" stroke="#cfc6a8" stroke-opacity="0.18" stroke-width="1.0"/><line x1="231.0" y1="70.8" x2="286.5" y2="41.3" stroke="#3a3020" stroke-opacity="0.41" stroke-width="1.0"/><line x1="133.5" y1="147.0" x2="223.0" y2="99.4" stroke="#cfc6a8" stroke-opacity="0.43" stroke-width="0.8"/><line x1="274.2" y1="146.1" x2="404.8" y2="76.7" stroke="#cfc6a8" stroke-opacity="0.34" stroke-width="2.0"/><line x1="109.4" y1="46.0" x2="301.2" y2="-55.9" stroke="#cfc6a8" stroke-opacity="0.20" stroke-width="1.2"/><line x1="56.4" y1="202.3" x2="166.5" y2="143.8" stroke="#5a5a30" stroke-opacity="0.21" stroke-width="0.8"/><line x1="228.3" y1="181.4" x2="374.5" y2="103.7" stroke="#3a3020" stroke-opacity="0.37" stroke-width="0.6"/><line x1="-55.2" y1="83.7" x2="3.9" y2="52.4" stroke="#cfc6a8" stroke-opacity="0.29" stroke-width="1.2"/><line x1="98.7" y1="-19.3" x2="191.8" y2="-68.8" stroke="#cfc6a8" stroke-opacity="0.31" stroke-width="2.5"/><line x1="-25.2" y1="71.4" x2="193.9" y2="-45.1" stroke="#cfc6a8" stroke-opacity="0.31" stroke-width="1.5"/><line x1="288.5" y1="265.4" x2="392.4" y2="210.2" stroke="#cfc6a8" stroke-opacity="0.39" stroke-width="2.5"/><line x1="34.3" y1="206.3" x2="126.3" y2="157.4" stroke="#3a3020" stroke-opacity="0.18" stroke-width="1.5"/><line x1="244.4" y1="211.5" x2="344.0" y2="158.6" stroke="#5a5a30" stroke-opacity="0.17" stroke-width="2.5"/><line x1="-44.1" y1="249.3" x2="170.4" y2="135.3" stroke="#5a5a30" stroke-opacity="0.16" stroke-width="1.0"/><line x1="-18.2" y1="176.6" x2="70.0" y2="129.7" stroke="#cfc6a8" stroke-opacity="0.41" stroke-width="2.5"/><line x1="103.1" y1="303.6" x2="190.3" y2="257.3" stroke="#cfc6a8" stroke-opacity="0.40" stroke-width="1.2"/><line x1="119.7" y1="258.5" x2="219.4" y2="205.5" stroke="#5a5a30" stroke-opacity="0.16" stroke-width="1.5"/><line x1="-4.9" y1="19.7" x2="126.2" y2="-50.0" stroke="#cfc6a8" stroke-opacity="0.18" stroke-width="1.2"/><line x1="210.1" y1="19.8" x2="292.2" y2="-23.8" stroke="#3a3020" stroke-opacity="0.14" stroke-width="1.2"/><line x1="313.3" y1="52.0" x2="520.9" y2="-58.4" stroke="#5a5a30" stroke-opacity="0.25" stroke-width="0.8"/><line x1="-39.4" y1="181.4" x2="85.5" y2="115.0" stroke="#5a5a30" stroke-opacity="0.20" stroke-width="1.0"/><line x1="-28.3" y1="35.7" x2="31.6" y2="3.9" stroke="#cfc6a8" stroke-opacity="0.27" stroke-width="1.2"/><line x1="95.2" y1="212.2" x2="204.2" y2="154.3" stroke="#3a3020" stroke-opacity="0.19" stroke-width="2.5"/><line x1="127.2" y1="35.7" x2="202.2" y2="-4.1" stroke="#cfc6a8" stroke-opacity="0.26" stroke-width="1.5"/><line x1="191.8" y1="33.7" x2="409.4" y2="-82.0" stroke="#3a3020" stroke-opacity="0.22" stroke-width="2.5"/><line x1="264.7" y1="252.1" x2="407.2" y2="176.4" stroke="#cfc6a8" stroke-opacity="0.39" stroke-width="1.5"/><line x1="55.1" y1="54.8" x2="107.8" y2="26.7" stroke="#3a3020" stroke-opacity="0.20" stroke-width="2.5"/><line x1="221.0" y1="6.8" x2="415.4" y2="-96.6" stroke="#3a3020" stroke-opacity="0.33" stroke-width="0.8"/><line x1="181.6" y1="129.2" x2="402.3" y2="11.8" stroke="#cfc6a8" stroke-opacity="0.41" stroke-width="1.0"/><line x1="186.5" y1="272.9" x2="229.8" y2="249.9" stroke="#cfc6a8" stroke-opacity="0.31" stroke-width="1.2"/><line x1="-61.9" y1="115.7" x2="137.9" y2="9.5" stroke="#3a3020" stroke-opacity="0.12" stroke-width="1.5"/><line x1="126.8" y1="75.1" x2="312.5" y2="-23.6" stroke="#3a3020" stroke-opacity="0.19" stroke-width="0.8"/><line x1="19.3" y1="321.3" x2="121.8" y2="266.8" stroke="#cfc6a8" stroke-opacity="0.33" stroke-width="0.6"/><line x1="314.2" y1="274.2" x2="402.4" y2="227.4" stroke="#3a3020" stroke-opacity="0.13" stroke-width="1.2"/><line x1="35.9" y1="53.8" x2="208.3" y2="-37.9" stroke="#3a3020" stroke-opacity="0.24" stroke-width="1.0"/><line x1="138.0" y1="113.3" x2="219.3" y2="70.1" stroke="#cfc6a8" stroke-opacity="0.40" stroke-width="1.2"/><line x1="220.0" y1="248.7" x2="420.6" y2="142.1" stroke="#3a3020" stroke-opacity="0.44" stroke-width="2.0"/><line x1="159.4" y1="102.3" x2="261.1" y2="48.3" stroke="#cfc6a8" stroke-opacity="0.28" stroke-width="2.5"/><line x1="320.8" y1="196.6" x2="504.4" y2="99.0" stroke="#cfc6a8" stroke-opacity="0.44" stroke-width="1.2"/><line x1="300.5" y1="140.4" x2="347.8" y2="115.3" stroke="#cfc6a8" stroke-opacity="0.40" stroke-width="1.0"/><line x1="118.4" y1="341.2" x2="153.5" y2="322.5" stroke="#5a5a30" stroke-opacity="0.29" stroke-width="1.0"/><line x1="58.4" y1="57.9" x2="132.9" y2="18.3" stroke="#cfc6a8" stroke-opacity="0.20" stroke-width="1.0"/><line x1="169.9" y1="115.4" x2="385.2" y2="1.0" stroke="#3a3020" stroke-opacity="0.31" stroke-width="0.6"/><line x1="27.5" y1="148.9" x2="221.3" y2="45.8" stroke="#cfc6a8" stroke-opacity="0.31" stroke-width="0.8"/><line x1="216.0" y1="-28.7" x2="332.4" y2="-90.6" stroke="#3a3020" stroke-opacity="0.13" stroke-width="2.0"/><line x1="-15.4" y1="277.4" x2="175.3" y2="176.0" stroke="#5a5a30" stroke-opacity="0.23" stroke-width="2.0"/><line x1="225.4" y1="-8.4" x2="431.0" y2="-117.8" stroke="#cfc6a8" stroke-opacity="0.43" stroke-width="1.2"/><line x1="-69.2" y1="377.3" x2="99.2" y2="287.8" stroke="#3a3020" stroke-opacity="0.15" stroke-width="1.0"/><line x1="-65.0" y1="315.1" x2="5.6" y2="277.6" stroke="#5a5a30" stroke-opacity="0.15" stroke-width="1.2"/><line x1="-73.5" y1="378.5" x2="73.3" y2="300.4" stroke="#3a3020" stroke-opacity="0.30" stroke-width="0.6"/><line x1="80" y1="35" x2="160" y2="-5" stroke="#2e2a1e" stroke-opacity="0.7" stroke-width="3.0"/><line x1="200" y1="125" x2="340" y2="40" stroke="#2e2a1e" stroke-opacity="0.7" stroke-width="3.5"/><line x1="-10" y1="120" x2="90" y2="72" stroke="#2e2a1e" stroke-opacity="0.7" stroke-width="2.5"/><line x1="100" y1="175" x2="340" y2="30" stroke="#2e2a1e" stroke-opacity="0.7" stroke-width="1.8"/><line x1="-10" y1="178" x2="120" y2="110" stroke="#2e2a1e" stroke-opacity="0.7" stroke-width="2.2"/><line x1="150" y1="70" x2="260" y2="10" stroke="#2e2a1e" stroke-opacity="0.7" stroke-width="1.5"/><ellipse cx="150" cy="5" rx="12" ry="4" fill="#2e2a1e" opacity="0.6" transform="rotate(-25 150 5)"/><ellipse cx="100" cy="30" rx="6" ry="3" fill="#2e2a1e" opacity="0.6" transform="rotate(-25 100 30)"/><ellipse cx="275" cy="65" rx="10" ry="4" fill="#2e2a1e" opacity="0.6" transform="rotate(-25 275 65)"/><ellipse cx="260" cy="10" rx="8" ry="3" fill="#2e2a1e" opacity="0.6" transform="rotate(-25 260 10)"/>
<path d="M0 0 H331 V4 Q300 7 270 3 Q240 8 200 4 Q160 7 120 3 Q80 7 40 4 Q20 6 0 3 Z" fill="#6a8a22" opacity="0.8"/>
</svg>
  <div class="abs" style="left:0;top:626px;width:331px;height:35px;background:rgba(255,255,255,0.08)"></div>
</div>
<!-- HEADER -->
<svg class="abs" style="left:0;top:0" width="60" height="64" viewBox="0 0 60 64">
  <path fill="#fff" d="M13.2 44.1 L33.9 27.6 L42 34.1 L42 28 L48.6 28 L48.6 39.4 L54.6 44.1 L51.8 47.2 L33.9 32.8 L16 47.2 Z"/>
  <path fill="#fff" d="M33.9 34.8 L48.6 46.6 L48.6 60 L37 60 L37 50.3 L30.7 50.3 L30.7 60 L19 60 L19 46.6 Z"/>
</svg>
<div class="t" style="left:75px;top:29px;font-size:36px;line-height:40px;font-weight:bold;color:#fff">FineUIMvc在线示例</div>
<div class="t" style="left:434px;top:31px;font-size:19px;color:rgba(255,255,255,0.4)">搜索示例</div>
<svg class="abs" style="left:604px;top:32px" width="24" height="24" viewBox="0 0 24 24">
  <circle cx="9.5" cy="9.5" r="7.2" fill="none" stroke="#c9ccb0" stroke-width="3.6"/>
  <path d="M14.5 14.5 L21.5 21.5" stroke="#c9ccb0" stroke-width="4" stroke-linecap="round"/>
</svg>

<!-- FREE badge -->
<svg class="abs" style="left:681.5px;top:-20px" width="68" height="68" viewBox="-34 -34 68 68">
  <polygon id="star" fill="#ff4500" points="0.0,-32.5 2.6,-28.4 6.0,-31.9 7.8,-27.4 11.7,-30.3 12.7,-25.5 17.1,-27.6 17.2,-22.7 21.9,-24.0 21.1,-19.2 25.9,-19.6 24.2,-15.0 29.1,-14.5 26.6,-10.3 31.3,-8.9 28.0,-5.2 32.4,-3.0 28.5,0.0 32.4,3.0 28.0,5.2 31.3,8.9 26.6,10.3 29.1,14.5 24.2,15.0 25.9,19.6 21.1,19.2 21.9,24.0 17.2,22.7 17.1,27.6 12.7,25.5 11.7,30.3 7.8,27.4 6.0,31.9 2.6,28.4 0.0,32.5 -2.6,28.4 -6.0,31.9 -7.8,27.4 -11.7,30.3 -12.7,25.5 -17.1,27.6 -17.2,22.7 -21.9,24.0 -21.1,19.2 -25.9,19.6 -24.2,15.0 -29.1,14.5 -26.6,10.3 -31.3,8.9 -28.0,5.2 -32.4,3.0 -28.5,0.0 -32.4,-3.0 -28.0,-5.2 -31.3,-8.9 -26.6,-10.3 -29.1,-14.5 -24.2,-15.0 -25.9,-19.6 -21.1,-19.2 -21.9,-24.0 -17.2,-22.7 -17.1,-27.6 -12.7,-25.5 -11.7,-30.3 -7.8,-27.4 -6.0,-31.9 -2.6,-28.4"/>
</svg>
<div class="t" style="left:696px;top:3px;font-size:16px;line-height:24px;font-weight:bold;color:#fff;transform:scaleX(0.88);transform-origin:0 0;-webkit-text-stroke:0.5px #fff">FREE!</div>

<!-- download -->
<svg class="abs" style="left:774px;top:14px" width="32" height="29" viewBox="0 0 32 29">
  <path fill="#fff" d="M13 0 H19 V8 H25 L16 18 L7 8 H13 Z"/>
  <path fill="#fff" d="M2 18 H10 L16 23.5 L22 18 H30 Q31.5 18 31.5 19.5 V27 Q31.5 28.5 30 28.5 H2 Q0.5 28.5 0.5 27 V19.5 Q0.5 18 2 18 Z"/>
  <circle cx="22.5" cy="24" r="1.1" fill="#5b6d0c"/><circle cx="26" cy="24" r="1.1" fill="#5b6d0c"/>
</svg>
<div class="t hdtxt" style="left:726px;top:51px">基础版（免费）</div>

<!-- envelope -->
<svg class="abs" style="left:917px;top:18px" width="34" height="28" viewBox="0 0 34 28">
  <rect x="1.5" y="1.5" width="30" height="24" rx="2.5" fill="none" stroke="#fff" stroke-width="3"/>
  <path d="M3 4 L16.5 15 L30 4" fill="none" stroke="#fff" stroke-width="3" stroke-linejoin="round"/>
</svg>
<div class="t hdtxt" style="left:888px;top:51px">企业版试用</div>

<!-- mobile -->
<svg class="abs" style="left:1042px;top:17.5px" width="15" height="25" viewBox="0 0 15 25">
  <path fill="#fff" fill-rule="evenodd" d="M2.5 0 H12.5 Q15 0 15 2.5 V22 Q15 24.5 12.5 24.5 H2.5 Q0 24.5 0 22 V2.5 Q0 0 2.5 0 Z M2.6 4.3 V19.6 H12.4 V4.3 Z M7.5 20.8 A1.3 1.3 0 1 0 7.5 23.4 A1.3 1.3 0 1 0 7.5 20.8 Z M5.5 1.8 V2.6 H9.5 V1.8 Z"/>
</svg>
<div class="t hdtxt" style="left:1013px;top:51px">移动示例</div>

<!-- spinner -->
<svg class="abs" style="left:1139.5px;top:12px" width="35" height="35" viewBox="0 0 34 34">
  <circle cx="17" cy="4.5" r="3.3" fill="#fff"/>
  <circle cx="26" cy="8" r="3.8" fill="#fff"/>
  <circle cx="30" cy="17" r="2.6" fill="#fff"/>
  <circle cx="26" cy="26" r="2.6" fill="#fff"/>
  <circle cx="17" cy="30" r="2.6" fill="#fff"/>
  <circle cx="8" cy="26" r="2.6" fill="#fff"/>
  <circle cx="4" cy="17" r="2.6" fill="#fff"/>
  <circle cx="8" cy="8" r="3" fill="#fff"/>
</svg>
<div class="t hdtxt" style="left:1121px;top:51px">加载动画</div>

<!-- bank -->
<svg class="abs" style="left:1247px;top:13px" width="35" height="35" viewBox="0 0 35 35">
  <path fill="#fff" d="M17.5 0.5 L34 6.5 V10 H1 V6.5 Z"/>
  <rect x="3" y="10" width="29" height="2" fill="#fff"/>
  <rect x="4.5" y="12" width="4" height="13" fill="#fff"/>
  <rect x="11.5" y="12" width="4" height="13" fill="#fff"/>
  <rect x="19" y="12" width="4" height="13" fill="#fff"/>
  <rect x="26.5" y="12" width="4" height="13" fill="#fff"/>
  <rect x="3" y="25" width="29" height="3" fill="#fff"/>
  <rect x="1" y="29" width="33" height="5" fill="#fff"/>
</svg>
<div class="t hdtxt" style="left:1229px;top:51px">主题仓库</div>

<!-- avatar -->
<svg class="abs" style="left:1335.5px;top:13.5px" width="64" height="64" viewBox="0 0 64 64">
  <circle cx="32" cy="32" r="32" fill="#fff"/>
  <path d="M11 20 Q12 4 32 1.5 Q52 3 53.5 20 Q50 17 46 15 Q32 12 18 15 Q13 17 11 20 Z" fill="#4a4a4a"/>
  <path d="M12 21 Q14 15 18 16 M47 16 Q52 17 53 21" fill="none" stroke="#555" stroke-width="1.2"/>
  <circle cx="22.6" cy="10.1" r="0.7" fill="#fff" opacity="0.6"/><circle cx="27.3" cy="10.9" r="0.7" fill="#fff" opacity="0.6"/><circle cx="36.5" cy="3.9" r="0.7" fill="#fff" opacity="0.6"/><circle cx="14.5" cy="13.9" r="0.7" fill="#fff" opacity="0.6"/><circle cx="23.3" cy="6.0" r="0.7" fill="#fff" opacity="0.6"/><circle cx="49.8" cy="9.1" r="0.7" fill="#fff" opacity="0.6"/><circle cx="44.1" cy="9.2" r="0.7" fill="#fff" opacity="0.6"/><circle cx="37.0" cy="5.0" r="0.7" fill="#fff" opacity="0.6"/><circle cx="36.9" cy="14.3" r="0.7" fill="#fff" opacity="0.6"/><circle cx="32.8" cy="12.6" r="0.7" fill="#fff" opacity="0.6"/><circle cx="38.2" cy="3.8" r="0.7" fill="#fff" opacity="0.6"/><circle cx="41.3" cy="10.7" r="0.7" fill="#fff" opacity="0.6"/><circle cx="24.8" cy="3.4" r="0.7" fill="#fff" opacity="0.6"/><circle cx="45.2" cy="9.1" r="0.7" fill="#fff" opacity="0.6"/><circle cx="39.9" cy="14.4" r="0.7" fill="#fff" opacity="0.6"/><circle cx="39.7" cy="15.0" r="0.7" fill="#fff" opacity="0.6"/><circle cx="28.2" cy="13.4" r="0.7" fill="#fff" opacity="0.6"/><circle cx="30.0" cy="15.2" r="0.7" fill="#fff" opacity="0.6"/><circle cx="45.6" cy="4.3" r="0.7" fill="#fff" opacity="0.6"/><circle cx="18.9" cy="5.8" r="0.7" fill="#fff" opacity="0.6"/><circle cx="48.8" cy="8.7" r="0.7" fill="#fff" opacity="0.6"/><circle cx="36.6" cy="6.9" r="0.7" fill="#fff" opacity="0.6"/><circle cx="32.3" cy="8.0" r="0.7" fill="#fff" opacity="0.6"/><circle cx="26.6" cy="10.6" r="0.7" fill="#fff" opacity="0.6"/><circle cx="35.0" cy="14.8" r="0.7" fill="#fff" opacity="0.6"/><circle cx="38.6" cy="15.1" r="0.7" fill="#fff" opacity="0.6"/><circle cx="44.8" cy="15.9" r="0.7" fill="#fff" opacity="0.6"/><circle cx="38.2" cy="5.1" r="0.7" fill="#fff" opacity="0.6"/><circle cx="45.0" cy="15.5" r="0.7" fill="#fff" opacity="0.6"/><circle cx="46.6" cy="10.4" r="0.7" fill="#fff" opacity="0.6"/><circle cx="39.7" cy="5.7" r="0.7" fill="#fff" opacity="0.6"/><circle cx="43.9" cy="10.5" r="0.7" fill="#fff" opacity="0.6"/><circle cx="24.3" cy="3.8" r="0.7" fill="#fff" opacity="0.6"/><circle cx="44.7" cy="15.9" r="0.7" fill="#fff" opacity="0.6"/><circle cx="17.2" cy="13.4" r="0.7" fill="#fff" opacity="0.6"/><circle cx="28.8" cy="5.0" r="0.7" fill="#fff" opacity="0.6"/><circle cx="24.6" cy="13.0" r="0.7" fill="#fff" opacity="0.6"/><circle cx="45.4" cy="3.6" r="0.7" fill="#fff" opacity="0.6"/><circle cx="36.1" cy="3.6" r="0.7" fill="#fff" opacity="0.6"/><circle cx="39.9" cy="7.3" r="0.7" fill="#fff" opacity="0.6"/>
  <path d="M12.5 22 Q11 40 18 52 Q25 62 33 62 Q42 61 48 50 Q54 38 52 22" fill="none" stroke="#333" stroke-width="0.9"/>
  <path d="M11.5 23 Q4 20 4 28 Q5 36 12 37 M7 27 Q9 25 10 30" fill="none" stroke="#444" stroke-width="0.9"/>
  <path d="M52.5 23 Q60 20 60 28 Q59 36 52 37 M57 27 Q55 25 54 30" fill="none" stroke="#444" stroke-width="0.9"/>
  <rect x="14" y="20.5" width="13.5" height="5.5" rx="1" fill="none" stroke="#333" stroke-width="1.1"/>
  <rect x="36.5" y="20.5" width="15.5" height="5.5" rx="1" fill="none" stroke="#333" stroke-width="1.1"/>
  <path d="M27.5 22.5 Q32 21 36.5 22.5 M11 22 H14 M52 22 H54" fill="none" stroke="#333" stroke-width="1"/>
  <path d="M17 23 H19 M21 23 H23 M40 23 H42 M44 23 H46" stroke="#666" stroke-width="1"/>
  <path d="M27 27 Q23 36 25.5 39.5 Q30 41 37 37" fill="none" stroke="#333" stroke-width="1"/>
  <path d="M22.5 45 Q33 49 45 42 Q43 52 34 53 Q25 53 22.5 45 Z" fill="#fff" stroke="#333" stroke-width="1.1"/>
  <path d="M23.5 47.5 Q33 51 44 45.5 M27 46.5 L27.5 52 M31 47.5 V53 M35 47.5 V53 M39 46 L38.5 52 M42 44.5 L41.5 50" fill="none" stroke="#555" stroke-width="0.8"/>
</svg>
<div class="t" style="left:1410px;top:32px;font-size:21.5px;color:#fff">三生石上</div>
<svg class="abs" style="left:1502px;top:41px" width="16" height="9" viewBox="0 0 16 9"><path d="M0.5 0 H15.5 L8 9 Z" fill="#fff"/></svg>

<!-- SIDEBAR -->

<!-- menu icons -->
<svg class="abs" style="left:13px;top:116px" width="24" height="22" viewBox="0 0 24 22">
  <path d="M12 1 L23 11 L20 11 L20 19 L4 19 L4 11 L1 11 Z" fill="#f4f0e6" stroke="#c98a4a" stroke-width="1.2"/>
  <path d="M12 1 L23 11 L20 12 L12 4.5 L4 12 L1 11 Z" fill="#d89a5a"/>
  <rect x="9.5" y="12" width="5" height="7" fill="#8a8a8a"/>
  <path d="M0 21 Q6 17 12 20 Q18 17 24 21 Z" fill="#4caa3c"/>
</svg>
<div class="t side" style="left:48px;top:111px">基本用法</div>
<svg class="abs" style="left:303px;top:118px" width="10" height="15" viewBox="0 0 10 15"><path d="M0.5 0.5 L9 7.5 L0.5 14.5 Z" fill="#fff"/></svg>

<svg class="abs" style="left:13px;top:185px" width="23" height="19" viewBox="0 0 23 19">
  <rect x="0.5" y="0.5" width="22" height="18" rx="1.5" fill="#eef2f8" stroke="#6a92d0"/>
  <rect x="1" y="1" width="21" height="3" fill="#8fb0e4"/>
  <rect x="3" y="7" width="4" height="2" fill="#4a7cd0"/><rect x="9" y="6" width="11" height="4" fill="#fff" stroke="#b8b8b8" stroke-width="0.8"/>
  <rect x="3" y="13" width="4" height="2" fill="#4a7cd0"/><rect x="9" y="12" width="11" height="4" fill="#fff" stroke="#b8b8b8" stroke-width="0.8"/>
</svg>
<div class="t side" style="left:48px;top:180px">表单控件</div>
<svg class="abs" style="left:303px;top:187px" width="10" height="15" viewBox="0 0 10 15"><path d="M0.5 0.5 L9 7.5 L0.5 14.5 Z" fill="#fff"/></svg>

<svg class="abs" style="left:13px;top:254px" width="23" height="18" viewBox="0 0 23 18">
  <rect x="0.5" y="0.5" width="22" height="17" rx="1.5" fill="#fafafa" stroke="#7a9ad6"/>
  <rect x="1" y="1" width="21" height="4" fill="#9ab6e6"/>
  <path d="M3 8 H20 M3 11 H20 M3 14 H20" stroke="#b4b4b4" stroke-width="1.4" stroke-dasharray="4 2"/>
</svg>
<div class="t side" style="left:48px;top:248px">表格控件</div>
<svg class="abs" style="left:303px;top:255px" width="10" height="15" viewBox="0 0 10 15"><path d="M0.5 0.5 L9 7.5 L0.5 14.5 Z" fill="#fff"/></svg>

<svg class="abs" style="left:12px;top:320px" width="26" height="25" viewBox="0 0 26 25">
  <rect x="1" y="6.5" width="10" height="13" rx="2" fill="#6aaa5a"/><rect x="1" y="6.5" width="10" height="4" rx="1.5" fill="#9ad08a"/>
  <rect x="10.5" y="12" width="15" height="12" rx="2" fill="#4a7ec8"/><rect x="10.5" y="12" width="15" height="4" rx="1.5" fill="#8ab4ec"/>
  <rect x="7" y="1" width="15" height="14" rx="2.5" fill="#e0505c"/><rect x="7" y="1" width="15" height="5" rx="2" fill="#f4909a"/>
</svg>
<div class="t side" style="left:48px;top:317px">更多控件</div>
<svg class="abs" style="left:303px;top:324px" width="10" height="15" viewBox="0 0 10 15"><path d="M0.5 0.5 L9 7.5 L0.5 14.5 Z" fill="#fff"/></svg>

<svg class="abs" style="left:12px;top:388px" width="26" height="25" viewBox="0 0 26 25">
  <path d="M2 14 A11 11 0 0 1 24 14" fill="none" stroke="#f0a070" stroke-width="3"/>
  <path d="M6 14 A7 7 0 0 1 20 14" fill="none" stroke="#f09060" stroke-width="2.6"/>
  <circle cx="13" cy="13" r="2.5" fill="#e07040"/>
  <path d="M13 13 L7 24 L13 20 L19 24 Z" fill="#9a9a9a"/>
</svg>
<div class="t side" style="left:48px;top:385px">移动控件</div>
<div class="t" style="left:133px;top:388px;font-size:16px;line-height:26px;color:#ff1010">Corp.</div>
<svg class="abs" style="left:303px;top:393px" width="10" height="15" viewBox="0 0 10 15"><path d="M0.5 0.5 L9 7.5 L0.5 14.5 Z" fill="#fff"/></svg>

<svg class="abs" style="left:14px;top:458px" width="22" height="21" viewBox="0 0 22 21">
  <rect x="0.5" y="0.5" width="21" height="20" fill="#f4f6fb" stroke="#6a8ed0"/>
  <rect x="1" y="1" width="20" height="4" fill="#8fb0e4"/>
  <rect x="3" y="7" width="4" height="11" fill="#4a7cd0"/>
  <rect x="9" y="7" width="10" height="11" fill="#6abf5a"/>
</svg>
<div class="t side" style="left:48px;top:454px">页面布局</div>
<svg class="abs" style="left:303px;top:461px" width="10" height="15" viewBox="0 0 10 15"><path d="M0.5 0.5 L9 7.5 L0.5 14.5 Z" fill="#fff"/></svg>

<svg class="abs" style="left:12px;top:525px" width="26" height="24" viewBox="0 0 26 24">
  <rect x="1" y="1.5" width="18.5" height="15.5" rx="1.5" fill="#d8dcc8" stroke="#8aa0b8" stroke-width="1"/>
  <rect x="1.5" y="2" width="17.5" height="3" fill="#9ab0c8"/>
  <rect x="6" y="7" width="19" height="15.5" rx="1.5" fill="#f8f8fc" stroke="#6a90d0" stroke-width="1.2"/>
  <rect x="6.5" y="7.5" width="18" height="3" fill="#8ab0e8"/>
</svg>
<div class="t side" style="left:48px;top:522px">内联框架</div>
<svg class="abs" style="left:300px;top:533px" width="15" height="9" viewBox="0 0 15 9"><path d="M0.5 0.5 H14.5 L7.5 8.5 Z" fill="#fff"/></svg>
<svg class="abs" style="left:40px;top:585px" width="22" height="26" viewBox="0 0 22 26"><path d="M0 0 H12.5 V8.5 H21 V25 H0 Z" fill="#fff"/><path d="M14 0.5 L20.5 7 H14 Z" fill="#fff"/></svg>
<div class="t side" style="left:75px;top:583px">弹出窗体（本页面或…</div>
<svg class="abs" style="left:40px;top:639px" width="22" height="26" viewBox="0 0 22 26"><path d="M0 0 H12.5 V8.5 H21 V25 H0 Z" fill="#fff"/><path d="M14 0.5 L20.5 7 H14 Z" fill="#fff"/></svg>
<div class="t side" style="left:75px;top:637px">表格与编辑窗体</div>
<svg class="abs" style="left:40px;top:693px" width="22" height="26" viewBox="0 0 22 26"><path d="M0 0 H12.5 V8.5 H21 V25 H0 Z" fill="#fff"/><path d="M14 0.5 L20.5 7 H14 Z" fill="#fff"/></svg>
<div class="t side" style="left:75px;top:691px">表格与编辑窗体（不…</div>
<svg class="abs" style="left:40px;top:747px" width="22" height="26" viewBox="0 0 22 26"><path d="M0 0 H12.5 V8.5 H21 V25 H0 Z" fill="#fff"/><path d="M14 0.5 L20.5 7 H14 Z" fill="#fff"/></svg>
<div class="t side" style="left:75px;top:745px">子窗口向父窗口传值</div>
<svg class="abs" style="left:40px;top:801px" width="22" height="26" viewBox="0 0 22 26"><path d="M0 0 H12.5 V8.5 H21 V25 H0 Z" fill="#fff"/><path d="M14 0.5 L20.5 7 H14 Z" fill="#fff"/></svg>
<div class="t side" style="left:75px;top:799px">子窗口向父窗口传值…</div>


<!-- MAIN -->
<div id="main"></div>

<!-- tabs -->
<div class="ln" style="left:331px;top:160px;width:1211px;background:#ddd"></div>
<div class="abs" style="left:453px;top:157px;width:205px;height:3px;background:#0d6b5b"></div>
<svg class="abs" style="left:357px;top:116px" width="22" height="18" viewBox="13 27.6 41.6 32.4" preserveAspectRatio="none">
  <path fill="#888" d="M13.2 44.1 L33.9 27.6 L42 34.1 L42 28 L48.6 28 L48.6 39.4 L54.6 44.1 L51.8 47.2 L33.9 32.8 L16 47.2 Z"/>
  <path fill="#888" d="M33.9 34.8 L48.6 46.6 L48.6 60 L37 60 L37 50.3 L30.7 50.3 L30.7 60 L19 60 L19 46.6 Z"/>
</svg>
<div class="t" style="left:383px;top:111px;color:#444">首页</div>
<div class="t" style="left:479px;top:111px;color:#0d6b5b;font-weight:bold">表格与编辑窗体</div>
<svg class="abs" style="left:629px;top:106px" width="13" height="13" viewBox="0 0 13 13"><path d="M1.5 1.5 L11.5 11.5 M11.5 1.5 L1.5 11.5" stroke="#6aa89c" stroke-width="3"/></svg>

<!-- tool icons -->
<svg class="abs" style="left:1364px;top:116px" width="27" height="19" viewBox="0 0 27 19">
  <path d="M7.5 2 L1.5 8.5 L7.5 15 M19.5 2 L25.5 8.5 L19.5 15" fill="none" stroke="#b5b5b5" stroke-width="2.6"/>
  <path d="M15.5 1 L11.5 18.5" stroke="#b5b5b5" stroke-width="2.4"/>
</svg>
<svg class="abs" style="left:1411px;top:113px" width="23" height="23" viewBox="0 0 23 23">
  <path d="M2.5 9.5 A9 9 0 0 1 18 6.5" fill="none" stroke="#b5b5b5" stroke-width="3.4"/>
  <path d="M20.5 1.5 V9.5 H12.5 Z" fill="#b5b5b5"/>
  <path d="M20.5 13.5 A9 9 0 0 1 5 16.5" fill="none" stroke="#b5b5b5" stroke-width="3.4"/>
  <path d="M1.5 21.5 V13.5 H9.5 Z" fill="#b5b5b5"/>
</svg>
<svg class="abs" style="left:1456px;top:113px" width="25" height="23" viewBox="0 0 25 23">
  <path d="M16 0.5 L24.5 8 L16 15.5 V11.5 Q6 11 3.5 14 Q2 17 3.5 22 Q0 17 0.5 12 Q1.5 5 16 5 Z" fill="#b5b5b5"/>
</svg>
<svg class="abs" style="left:1502px;top:114px" width="22" height="22" viewBox="0 0 22 22">
  <path d="M13 0.5 H21.5 V9 L18.5 6 L14.5 10 L12 7.5 L16 3.5 Z" fill="#b5b5b5"/>
  <path d="M9 21.5 H0.5 V13 L3.5 16 L7.5 12 L10 14.5 L6 18.5 Z" fill="#b5b5b5"/>
</svg>

<!-- search row -->
<div class="box" style="left:346px;top:176px;width:579px;height:53px"></div>
<div class="t" style="left:362px;top:188px;color:#9c9c9c">输入要搜索的关键词</div>
<svg class="abs" style="left:886px;top:189px" width="24" height="24" viewBox="0 0 24 24">
  <circle cx="9.5" cy="9.5" r="7.2" fill="none" stroke="#888" stroke-width="3.4"/>
  <path d="M14.5 14.5 L21.5 21.5" stroke="#888" stroke-width="3.8" stroke-linecap="round"/>
</svg>
<div class="box" style="left:937px;top:176px;width:591px;height:53px"></div>
<div class="t" style="left:952px;top:188px;color:#333">过滤条件一</div>
<svg class="abs" style="left:1494px;top:196px" width="15" height="8" viewBox="0 0 15 8"><path d="M0 0 H14.5 L7.2 8 Z" fill="#888"/></svg>

<!-- grid -->
<div class="abs" style="left:346px;top:240px;width:1182px;height:584px;border:1px solid #ddd;background:#fff"></div>
<div class="box" style="left:355px;top:249px;width:171px;height:53px"></div>
<svg class="abs" style="left:377px;top:265px" width="23" height="23" viewBox="0 0 23 23">
  <defs><radialGradient id="rg" cx="0.4" cy="0.3" r="0.8"><stop offset="0" stop-color="#f7a090"/><stop offset="1" stop-color="#d8403a"/></radialGradient></defs>
  <circle cx="11.5" cy="11.5" r="10.5" fill="url(#rg)" stroke="#d06a60" stroke-width="1"/>
  <rect x="6" y="9.8" width="11" height="3.4" fill="#fff"/>
</svg>
<div class="t" style="left:406px;top:260px;color:#333">删除选中项</div>

<div class="box" style="left:1368px;top:249px;width:152px;height:53px"></div>
<svg class="abs" style="left:1390px;top:265px" width="23" height="23" viewBox="0 0 23 23">
  <defs><radialGradient id="gg" cx="0.4" cy="0.3" r="0.8"><stop offset="0" stop-color="#b8e0a8"/><stop offset="1" stop-color="#4a9a3a"/></radialGradient></defs>
  <circle cx="11.5" cy="11.5" r="10.5" fill="url(#gg)" stroke="#6aaa5a" stroke-width="1"/>
  <path d="M11.5 5.5 V17.5 M5.5 11.5 H17.5" stroke="#fff" stroke-width="3.6"/>
</svg>
<div class="t" style="left:1419px;top:260px;color:#333">新增用户</div>

<div class="ln" style="left:347px;top:309px;width:1180px;background:#ddd"></div>
<div class="cb" style="left:358px;top:331px"></div>
<div class="t" style="left:457px;top:328px">姓名</div>
<div class="t" style="left:578px;top:328px">性别</div>
<div class="t" style="left:698px;top:328px">入学年份</div>
<div class="t" style="left:848px;top:328px">分组</div>
<div class="t" style="left:968px;top:328px">所学专业</div>
<div class="ln" style="left:347px;top:376px;width:1180px;background:#ddd"></div>
<div class="cb" style="left:358px;top:392px"></div>
<div class="t" style="left:418px;top:388px">1</div>
<div class="t" style="left:451px;top:388px">张萍萍</div>
<div class="t" style="left:571px;top:388px">女</div>
<div class="t" style="left:692px;top:388px">2000</div>
<svg class="abs" style="left:841px;top:391px" width="24" height="24" viewBox="0 0 24 24">
  <path d="M2 2 L11 2 L22.5 13.5 L13.5 22.5 L2 11 Z" fill="#fafafa" stroke="#c4c4c4" stroke-width="1.6" stroke-linejoin="round"/>
  <circle cx="6" cy="6" r="1.6" fill="none" stroke="#bbb" stroke-width="1"/>
  <path d="M12 7.5 L19.5 15 L15 19.5 L7.5 12 Z" fill="#8ccaf6"/>
</svg>
<div class="t u" style="left:962px;top:388px">材料科学与工程系</div>
<svg class="abs" style="left:1421px;top:392px" width="25" height="24" viewBox="0 0 25 24">
  <path d="M18 1.5 Q20 0.5 22.5 3 Q24.5 5.5 23 7 L8 22 L2 23 L3 17 Z" fill="#f2d040" stroke="#c08020" stroke-width="1.4" stroke-linejoin="round"/>
  <path d="M17 3 L21.5 7.5" stroke="#f0c8a0" stroke-width="2.5"/>
  <path d="M3 17 L8 22 L2 23 Z" fill="#7a4a10"/>
</svg>
<svg class="abs" style="left:1467px;top:392px" width="23" height="23" viewBox="0 0 23 23">
  <circle cx="11.5" cy="11.5" r="10.5" fill="url(#rg)" stroke="#d06a60" stroke-width="1"/>
  <rect x="6" y="9.8" width="11" height="3.4" fill="#fff"/>
</svg>
<div class="ln" style="left:347px;top:431px;width:1180px;background:#e6e6e6"></div>
<div class="abs" style="left:347px;top:432px;width:1180px;height:54px;background:#fbfbfb"></div>
<div class="cb" style="left:358px;top:447px"></div>
<div class="t" style="left:418px;top:443px">2</div>
<div class="t" style="left:451px;top:443px">陈飞</div>
<div class="t" style="left:571px;top:443px">男</div>
<div class="t" style="left:692px;top:443px">2000</div>
<svg class="abs" style="left:841px;top:446px" width="24" height="24" viewBox="0 0 24 24">
  <path d="M2 2 L11 2 L22.5 13.5 L13.5 22.5 L2 11 Z" fill="#fafafa" stroke="#c4c4c4" stroke-width="1.6" stroke-linejoin="round"/>
  <circle cx="6" cy="6" r="1.6" fill="none" stroke="#bbb" stroke-width="1"/>
  <path d="M12 7.5 L19.5 15 L15 19.5 L7.5 12 Z" fill="#8ccaf6"/>
</svg>
<div class="t u" style="left:962px;top:443px">化学系</div>
<svg class="abs" style="left:1421px;top:447px" width="25" height="24" viewBox="0 0 25 24">
  <path d="M18 1.5 Q20 0.5 22.5 3 Q24.5 5.5 23 7 L8 22 L2 23 L3 17 Z" fill="#f2d040" stroke="#c08020" stroke-width="1.4" stroke-linejoin="round"/>
  <path d="M17 3 L21.5 7.5" stroke="#f0c8a0" stroke-width="2.5"/>
  <path d="M3 17 L8 22 L2 23 Z" fill="#7a4a10"/>
</svg>
<svg class="abs" style="left:1467px;top:447px" width="23" height="23" viewBox="0 0 23 23">
  <circle cx="11.5" cy="11.5" r="10.5" fill="url(#rg)" stroke="#d06a60" stroke-width="1"/>
  <rect x="6" y="9.8" width="11" height="3.4" fill="#fff"/>
</svg>
<div class="ln" style="left:347px;top:486px;width:1180px;background:#e6e6e6"></div>
<div class="cb" style="left:358px;top:502px"></div>
<div class="t" style="left:418px;top:498px">3</div>
<div class="t" style="left:451px;top:498px">董婷婷</div>
<div class="t" style="left:571px;top:498px">女</div>
<div class="t" style="left:692px;top:498px">2000</div>
<svg class="abs" style="left:841px;top:501px" width="24" height="24" viewBox="0 0 24 24">
  <path d="M2 2 L11 2 L22.5 13.5 L13.5 22.5 L2 11 Z" fill="#fafafa" stroke="#c4c4c4" stroke-width="1.6" stroke-linejoin="round"/>
  <circle cx="6" cy="6" r="1.6" fill="none" stroke="#bbb" stroke-width="1"/>
  <path d="M12 7.5 L19.5 15 L15 19.5 L7.5 12 Z" fill="#8cb87a"/>
</svg>
<div class="t u" style="left:962px;top:498px">化学系</div>
<svg class="abs" style="left:1421px;top:502px" width="25" height="24" viewBox="0 0 25 24">
  <path d="M18 1.5 Q20 0.5 22.5 3 Q24.5 5.5 23 7 L8 22 L2 23 L3 17 Z" fill="#f2d040" stroke="#c08020" stroke-width="1.4" stroke-linejoin="round"/>
  <path d="M17 3 L21.5 7.5" stroke="#f0c8a0" stroke-width="2.5"/>
  <path d="M3 17 L8 22 L2 23 Z" fill="#7a4a10"/>
</svg>
<svg class="abs" style="left:1467px;top:502px" width="23" height="23" viewBox="0 0 23 23">
  <circle cx="11.5" cy="11.5" r="10.5" fill="url(#rg)" stroke="#d06a60" stroke-width="1"/>
  <rect x="6" y="9.8" width="11" height="3.4" fill="#fff"/>
</svg>
<div class="ln" style="left:347px;top:541px;width:1180px;background:#e6e6e6"></div>
<div class="abs" style="left:347px;top:542px;width:1180px;height:54px;background:#fbfbfb"></div>
<div class="cb" style="left:358px;top:557px"></div>
<div class="t" style="left:418px;top:553px">4</div>
<div class="t" style="left:451px;top:553px">刘国</div>
<div class="t" style="left:571px;top:553px">男</div>
<div class="t" style="left:692px;top:553px">2002</div>
<svg class="abs" style="left:841px;top:556px" width="24" height="24" viewBox="0 0 24 24">
  <path d="M2 2 L11 2 L22.5 13.5 L13.5 22.5 L2 11 Z" fill="#fafafa" stroke="#c4c4c4" stroke-width="1.6" stroke-linejoin="round"/>
  <circle cx="6" cy="6" r="1.6" fill="none" stroke="#bbb" stroke-width="1"/>
  <path d="M12 7.5 L19.5 15 L15 19.5 L7.5 12 Z" fill="#8cb87a"/>
</svg>
<div class="t u" style="left:962px;top:553px">化学系</div>
<svg class="abs" style="left:1421px;top:557px" width="25" height="24" viewBox="0 0 25 24">
  <path d="M18 1.5 Q20 0.5 22.5 3 Q24.5 5.5 23 7 L8 22 L2 23 L3 17 Z" fill="#f2d040" stroke="#c08020" stroke-width="1.4" stroke-linejoin="round"/>
  <path d="M17 3 L21.5 7.5" stroke="#f0c8a0" stroke-width="2.5"/>
  <path d="M3 17 L8 22 L2 23 Z" fill="#7a4a10"/>
</svg>
<svg class="abs" style="left:1467px;top:557px" width="23" height="23" viewBox="0 0 23 23">
  <circle cx="11.5" cy="11.5" r="10.5" fill="url(#rg)" stroke="#d06a60" stroke-width="1"/>
  <rect x="6" y="9.8" width="11" height="3.4" fill="#fff"/>
</svg>
<div class="ln" style="left:347px;top:596px;width:1180px;background:#e6e6e6"></div>
<div class="cb" style="left:358px;top:612px"></div>
<div class="t" style="left:418px;top:608px">5</div>
<div class="t" style="left:451px;top:608px">康颖颖</div>
<div class="t" style="left:571px;top:608px">女</div>
<div class="t" style="left:692px;top:608px">2008</div>
<svg class="abs" style="left:841px;top:611px" width="24" height="24" viewBox="0 0 24 24">
  <path d="M2 2 L11 2 L22.5 13.5 L13.5 22.5 L2 11 Z" fill="#fafafa" stroke="#c4c4c4" stroke-width="1.6" stroke-linejoin="round"/>
  <circle cx="6" cy="6" r="1.6" fill="none" stroke="#bbb" stroke-width="1"/>
  <path d="M12 7.5 L19.5 15 L15 19.5 L7.5 12 Z" fill="#f8b888"/>
</svg>
<div class="t u" style="left:962px;top:608px">数学系</div>
<svg class="abs" style="left:1421px;top:612px" width="25" height="24" viewBox="0 0 25 24">
  <path d="M18 1.5 Q20 0.5 22.5 3 Q24.5 5.5 23 7 L8 22 L2 23 L3 17 Z" fill="#f2d040" stroke="#c08020" stroke-width="1.4" stroke-linejoin="round"/>
  <path d="M17 3 L21.5 7.5" stroke="#f0c8a0" stroke-width="2.5"/>
  <path d="M3 17 L8 22 L2 23 Z" fill="#7a4a10"/>
</svg>
<svg class="abs" style="left:1467px;top:612px" width="23" height="23" viewBox="0 0 23 23">
  <circle cx="11.5" cy="11.5" r="10.5" fill="url(#rg)" stroke="#d06a60" stroke-width="1"/>
  <rect x="6" y="9.8" width="11" height="3.4" fill="#fff"/>
</svg>
<div class="ln" style="left:347px;top:651px;width:1180px;background:#e6e6e6"></div>

<!-- pager -->
<div class="ln" style="left:347px;top:753px;width:1180px;background:#ddd"></div>
<svg class="abs" style="left:379px;top:779px" width="20" height="18" viewBox="0 0 20 18"><path d="M9 1.5 L2.5 9 L9 16.5 M17 1.5 L10.5 9 L17 16.5" fill="none" stroke="#bbb" stroke-width="3.3"/></svg>
<svg class="abs" style="left:461px;top:779px" width="14" height="18" viewBox="0 0 14 18"><path d="M11 1.5 L4 9 L11 16.5" fill="none" stroke="#bbb" stroke-width="3.3"/></svg>
<div class="abs" style="left:514px;top:769px;width:1px;height:39px;background:#ccc"></div>
<div class="t" style="left:527px;top:774px">第</div>
<div class="box" style="left:559px;top:762px;width:54px;height:53px"></div>
<div class="t" style="left:574px;top:774px">1</div>
<div class="t" style="left:624px;top:774px">页，共 3 页</div>
<div class="abs" style="left:736px;top:769px;width:1px;height:39px;background:#ccc"></div>
<svg class="abs" style="left:775px;top:779px" width="14" height="18" viewBox="0 0 14 18"><path d="M3 1.5 L10 9 L3 16.5" fill="none" stroke="#888" stroke-width="3.3"/></svg>
<svg class="abs" style="left:852px;top:779px" width="20" height="18" viewBox="0 0 20 18"><path d="M3 1.5 L9.5 9 L3 16.5 M11 1.5 L17.5 9 L11 16.5" fill="none" stroke="#888" stroke-width="3.3"/></svg>
<div class="t" style="left:1319px;top:774px">显示 1 - 5 条，共 12 条</div>


</body></html>
